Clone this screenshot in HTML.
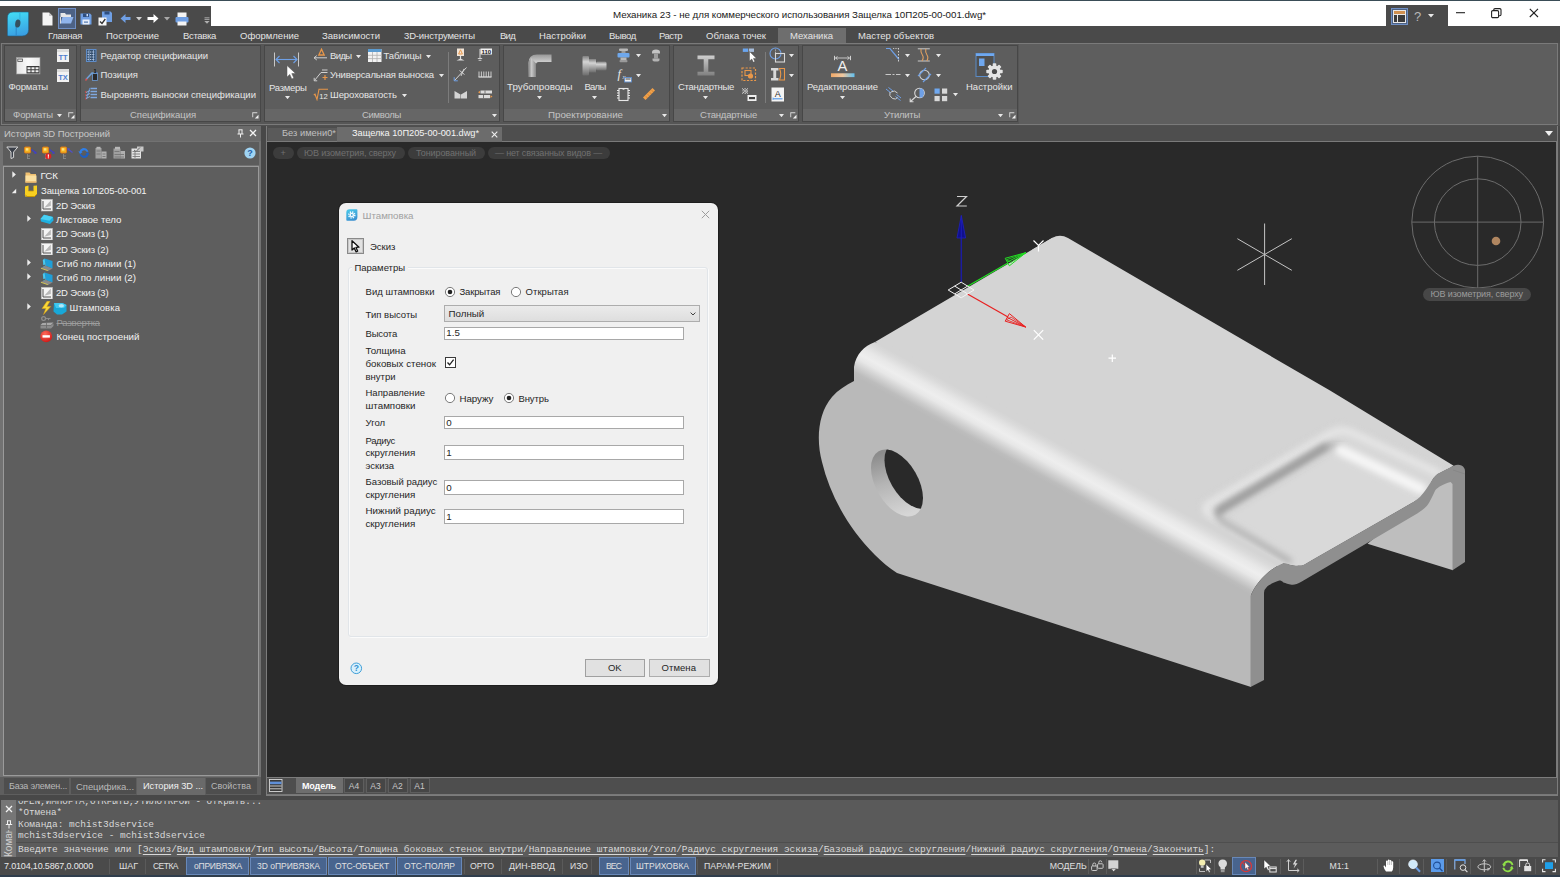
<!DOCTYPE html><html><head><meta charset="utf-8"><title>nanoCAD Mechanica</title><style>

html,body{margin:0;padding:0;}
body{width:1560px;height:877px;overflow:hidden;background:#484848;position:relative;font-family:"Liberation Sans",sans-serif;font-size:11px;}
body div,body span,body svg{position:absolute;}
span{white-space:pre;}

</style></head><body>
<div style="left:0px;top:0px;width:1560px;height:27px;background:#ffffff;"></div>
<div style="left:0px;top:0px;width:1560px;height:1px;background:#3a4d57;"></div>
<div style="left:0px;top:6px;width:211px;height:21px;background:#4a4a4a;"></div>
<div style="left:1386px;top:5px;width:62px;height:22px;background:#4a4a4a;"></div>
<div style="left:0px;top:26px;width:1560px;height:18px;background:#4a4a4a;"></div>
<div style="left:778px;top:28px;width:68px;height:16px;background:#6e6e6e;"></div>
<div style="left:0px;top:43px;width:1560px;height:83px;background:#505050;"></div>
<div style="left:1px;top:43px;width:1557px;height:82px;background:#565656;border:1px solid #7a7a7a;box-sizing:border-box;"></div>
<span style="left:613px;top:8.4px;font-size:9.75px;line-height:13.75px;color:#1a1a1a;letter-spacing:-0.031px;">Механика 23 - не для коммерческого использования Защелка 10П205-00-001.dwg*</span>
<span style="left:48px;top:29.2px;font-size:9.5px;line-height:13.5px;color:#e4e4e4;letter-spacing:-0.309px;">Главная</span>
<span style="left:106px;top:29.2px;font-size:9.5px;line-height:13.5px;color:#e4e4e4;letter-spacing:0.009px;">Построение</span>
<span style="left:183px;top:29.2px;font-size:9.5px;line-height:13.5px;color:#e4e4e4;letter-spacing:-0.331px;">Вставка</span>
<span style="left:240px;top:29.2px;font-size:9.5px;line-height:13.5px;color:#e4e4e4;letter-spacing:0.003px;">Оформление</span>
<span style="left:322px;top:29.2px;font-size:9.5px;line-height:13.5px;color:#e4e4e4;letter-spacing:0.031px;">Зависимости</span>
<span style="left:404px;top:29.2px;font-size:9.5px;line-height:13.5px;color:#e4e4e4;letter-spacing:-0.145px;">3D-инструменты</span>
<span style="left:500px;top:29.2px;font-size:9.5px;line-height:13.5px;color:#e4e4e4;letter-spacing:-0.731px;">Вид</span>
<span style="left:539px;top:29.2px;font-size:9.5px;line-height:13.5px;color:#e4e4e4;letter-spacing:0.046px;">Настройки</span>
<span style="left:609px;top:29.2px;font-size:9.5px;line-height:13.5px;color:#e4e4e4;letter-spacing:-0.346px;">Вывод</span>
<span style="left:659px;top:29.2px;font-size:9.5px;line-height:13.5px;color:#e4e4e4;letter-spacing:-0.539px;">Растр</span>
<span style="left:706px;top:29.2px;font-size:9.5px;line-height:13.5px;color:#e4e4e4;letter-spacing:0.064px;">Облака точек</span>
<span style="left:790px;top:29.2px;font-size:9.5px;line-height:13.5px;color:#e4e4e4;letter-spacing:-0.029px;">Механика</span>
<span style="left:858px;top:29.2px;font-size:9.5px;line-height:13.5px;color:#e4e4e4;letter-spacing:0.002px;">Мастер объектов</span>
<div style="left:4px;top:45px;width:73px;height:77px;background:#5d5d5d;border:1px solid #474747;box-sizing:border-box;"></div>
<div style="left:5px;top:109px;width:71px;height:12px;background:#666666;"></div>
<span style="left:13px;top:108.2px;font-size:9.5px;line-height:13.5px;color:#c4c4c4;letter-spacing:-0.082px;">Форматы</span>
<svg style="left:68px;top:112px;" width="7" height="7" viewBox="0 0 7 7"><path d="M0.3 0.3H5.3V1.2H1.2V5.3H0.3Z" fill="#dcdcdc"/><path d="M6.5 2.8V6.5H2.8Z" fill="#f0f0f0"/></svg>
<svg style="left:56.5px;top:113.5px;" width="5" height="3.5" viewBox="0 0 5 3.5"><path d="M0 0H5L2.5 3.2Z" fill="#e8e8e8"/></svg>
<div style="left:80px;top:45px;width:181px;height:77px;background:#5d5d5d;border:1px solid #474747;box-sizing:border-box;"></div>
<div style="left:81px;top:109px;width:179px;height:12px;background:#666666;"></div>
<span style="left:130px;top:108.2px;font-size:9.5px;line-height:13.5px;color:#c4c4c4;letter-spacing:-0.059px;">Спецификация</span>
<svg style="left:252px;top:112px;" width="7" height="7" viewBox="0 0 7 7"><path d="M0.3 0.3H5.3V1.2H1.2V5.3H0.3Z" fill="#dcdcdc"/><path d="M6.5 2.8V6.5H2.8Z" fill="#f0f0f0"/></svg>
<div style="left:264px;top:45px;width:236px;height:77px;background:#5d5d5d;border:1px solid #474747;box-sizing:border-box;"></div>
<div style="left:265px;top:109px;width:234px;height:12px;background:#666666;"></div>
<span style="left:362px;top:108.2px;font-size:9.5px;line-height:13.5px;color:#c4c4c4;letter-spacing:-0.299px;">Символы</span>
<svg style="left:491.5px;top:113.5px;" width="5" height="3.5" viewBox="0 0 5 3.5"><path d="M0 0H5L2.5 3.2Z" fill="#e8e8e8"/></svg>
<div style="left:503px;top:45px;width:167px;height:77px;background:#5d5d5d;border:1px solid #474747;box-sizing:border-box;"></div>
<div style="left:504px;top:109px;width:165px;height:12px;background:#666666;"></div>
<span style="left:548px;top:108.1px;font-size:9.75px;line-height:13.75px;color:#c4c4c4;letter-spacing:-0.011px;">Проектирование</span>
<svg style="left:661.5px;top:113.5px;" width="5" height="3.5" viewBox="0 0 5 3.5"><path d="M0 0H5L2.5 3.2Z" fill="#e8e8e8"/></svg>
<div style="left:673px;top:45px;width:126px;height:77px;background:#5d5d5d;border:1px solid #474747;box-sizing:border-box;"></div>
<div style="left:674px;top:109px;width:124px;height:12px;background:#666666;"></div>
<span style="left:700px;top:108.2px;font-size:9.5px;line-height:13.5px;color:#c4c4c4;letter-spacing:-0.205px;">Стандартные</span>
<svg style="left:790px;top:112px;" width="7" height="7" viewBox="0 0 7 7"><path d="M0.3 0.3H5.3V1.2H1.2V5.3H0.3Z" fill="#dcdcdc"/><path d="M6.5 2.8V6.5H2.8Z" fill="#f0f0f0"/></svg>
<svg style="left:778.5px;top:113.5px;" width="5" height="3.5" viewBox="0 0 5 3.5"><path d="M0 0H5L2.5 3.2Z" fill="#e8e8e8"/></svg>
<div style="left:802px;top:45px;width:216px;height:77px;background:#5d5d5d;border:1px solid #474747;box-sizing:border-box;"></div>
<div style="left:803px;top:109px;width:214px;height:12px;background:#666666;"></div>
<span style="left:884px;top:108.2px;font-size:9.5px;line-height:13.5px;color:#c4c4c4;letter-spacing:-0.247px;">Утилиты</span>
<svg style="left:1009px;top:112px;" width="7" height="7" viewBox="0 0 7 7"><path d="M0.3 0.3H5.3V1.2H1.2V5.3H0.3Z" fill="#dcdcdc"/><path d="M6.5 2.8V6.5H2.8Z" fill="#f0f0f0"/></svg>
<svg style="left:997.5px;top:113.5px;" width="5" height="3.5" viewBox="0 0 5 3.5"><path d="M0 0H5L2.5 3.2Z" fill="#e8e8e8"/></svg>
<div style="left:1019px;top:44px;width:538px;height:80px;background:#5e5e5e;"></div>
<div style="left:0px;top:126px;width:261px;height:15px;background:#6a6a6a;"></div>
<span style="left:4px;top:126.8px;font-size:9.5px;line-height:13.5px;color:#c8c8c8;letter-spacing:-0.057px;">История 3D Построений</span>
<div style="left:0px;top:141px;width:261px;height:637px;background:#727272;"></div>
<div style="left:3px;top:142px;width:256px;height:23px;background:#5c5c5c;"></div>
<div style="left:3px;top:165.5px;width:256px;height:610.5px;background:#5e5e5e;border:1px solid #9a9a9a;box-sizing:border-box;"></div>
<div style="left:0px;top:777px;width:261px;height:18px;background:#5e5e5e;"></div>
<div style="left:4px;top:778px;width:65px;height:16px;background:#4e4e4e;"></div>
<div style="left:71px;top:778px;width:65px;height:16px;background:#4e4e4e;"></div>
<div style="left:206px;top:778px;width:51px;height:16px;background:#4e4e4e;"></div>
<div style="left:137px;top:778px;width:68px;height:17px;background:#6a6a6a;"></div>
<span style="left:9px;top:780.0px;font-size:9.0px;line-height:13.0px;color:#b8b8b8;letter-spacing:-0.197px;">База элемен...</span>
<span style="left:76px;top:779.8px;font-size:9.5px;line-height:13.5px;color:#b8b8b8;letter-spacing:-0.062px;">Специфика...</span>
<span style="left:143px;top:779.9px;font-size:9.25px;line-height:13.25px;color:#f0f0f0;letter-spacing:-0.039px;">История 3D ...</span>
<span style="left:211px;top:780.0px;font-size:9.0px;line-height:13.0px;color:#b8b8b8;letter-spacing:0.060px;">Свойства</span>
<div style="left:265.5px;top:126px;width:1292.5px;height:670px;background:#7c7c7c;"></div>
<div style="left:267px;top:126px;width:1290px;height:15px;background:#4e4e4e;"></div>
<div style="left:267px;top:141px;width:1290px;height:1px;background:#7a7a7a;"></div>
<div style="left:268px;top:128px;width:69px;height:13px;background:#5a5a5a;"></div>
<div style="left:337px;top:127px;width:165px;height:15px;background:#6c6c6c;"></div>
<span style="left:282px;top:127.4px;font-size:9.25px;line-height:13.25px;color:#c0c0c0;letter-spacing:0.044px;">Без имени0*</span>
<span style="left:352px;top:127.4px;font-size:9.25px;line-height:13.25px;color:#f4f4f4;letter-spacing:-0.032px;">Защелка 10П205-00-001.dwg*</span>
<svg style="left:491px;top:130.5px;" width="7" height="7" viewBox="0 0 7 7"><path d="M0.7 0.7L6.3 6.3M6.3 0.7L0.7 6.3" stroke="#f0f0f0" stroke-width="1.1"/></svg>
<svg style="left:1545px;top:131px;" width="8" height="5" viewBox="0 0 8 5"><path d="M0 0H8L4 5Z" fill="#f0f0f0"/></svg>
<div style="left:267px;top:142px;width:1289px;height:634.7px;background:#292929;"></div>
<div style="left:1556px;top:142px;width:1px;height:634px;background:#7a7a7a;"></div>
<div style="left:267px;top:777.5px;width:1290px;height:17px;background:#4e4e4e;"></div>
<div style="left:267px;top:794px;width:1290px;height:1px;background:#787878;"></div>
<div style="left:296px;top:778px;width:47px;height:15px;background:#6e6e6e;"></div>
<span style="left:302px;top:779.5px;font-size:9.0px;line-height:13.0px;color:#ffffff;font-weight:bold;letter-spacing:-0.141px;">Модель</span>
<div style="left:344px;top:778px;width:20px;height:15px;background:#464646;border:1px solid #5e5e5e;box-sizing:border-box;"></div>
<span style="left:348.7px;top:779.8px;font-size:8.5px;line-height:12.5px;color:#c8c8c8;letter-spacing:0.050px;">А4</span>
<div style="left:365.5px;top:778px;width:20px;height:15px;background:#464646;border:1px solid #5e5e5e;box-sizing:border-box;"></div>
<span style="left:370.2px;top:779.8px;font-size:8.5px;line-height:12.5px;color:#c8c8c8;letter-spacing:0.050px;">А3</span>
<div style="left:387.5px;top:778px;width:20px;height:15px;background:#464646;border:1px solid #5e5e5e;box-sizing:border-box;"></div>
<span style="left:392.2px;top:779.8px;font-size:8.5px;line-height:12.5px;color:#c8c8c8;letter-spacing:0.050px;">А2</span>
<div style="left:409.5px;top:778px;width:20px;height:15px;background:#464646;border:1px solid #5e5e5e;box-sizing:border-box;"></div>
<span style="left:414.2px;top:779.8px;font-size:8.5px;line-height:12.5px;color:#c8c8c8;letter-spacing:0.050px;">А1</span>
<svg style="left:269px;top:779px;" width="14" height="13" viewBox="0 0 14 13"><rect x="0.5" y="0.5" width="12.5" height="12" fill="#3a3a3a" stroke="#d8d8d8" stroke-width="0.9"/><rect x="1" y="2.6" width="11.5" height="2.6" fill="#5f8fd8"/><path d="M1 7H12.5M1 9.8H12.5" stroke="#d8d8d8" stroke-width="0.9"/></svg>
<div style="left:1px;top:800px;width:1557px;height:57px;background:#5a5a5a;"></div>
<div style="left:1px;top:800px;width:15px;height:57px;background:#767676;"></div>
<div style="left:16px;top:842px;width:1542px;height:1px;background:#4e4e4e;"></div>
<div style="left:16px;top:843px;width:1542px;height:14px;background:#5c5c5c;"></div>
<span style="left:18px;top:795.4px;font-size:9.25px;line-height:13.25px;color:#d8d8d8;font-family:'Liberation Mono',monospace;letter-spacing:-0.006px;clip-path:inset(5.5px 0 0 0);">OPEN,ИМПОРТА,ОТКРЫТЬ,УТИЛОТКРОЙ - Открыть...</span>
<span style="left:18px;top:806.1px;font-size:9.25px;line-height:13.25px;color:#d8d8d8;font-family:'Liberation Mono',monospace;letter-spacing:-0.052px;">*Отмена*</span>
<span style="left:18px;top:817.9px;font-size:9.5px;line-height:13.5px;color:#d8d8d8;font-family:'Liberation Mono',monospace;letter-spacing:-0.035px;">Команда: mchist3dservice</span>
<span style="left:18px;top:829.1px;font-size:9.5px;line-height:13.5px;color:#d8d8d8;font-family:'Liberation Mono',monospace;letter-spacing:-0.034px;">mchist3dservice - mchist3dservice</span>
<div style="left:0px;top:857px;width:1560px;height:18px;background:#4a4a4a;"></div>
<div style="left:0px;top:875px;width:1560px;height:2px;background:#2f3d4c;"></div>
<span style="left:4px;top:859.5px;font-size:9.0px;line-height:13.0px;color:#e8e8e8;letter-spacing:-0.171px;">7.0104,10.5867,0.0000</span>
<div style="left:186px;top:857px;width:63px;height:17.5px;background:#48648e;border:1px solid #6888b8;box-sizing:border-box;"></div>
<div style="left:250px;top:857px;width:77px;height:17.5px;background:#48648e;border:1px solid #6888b8;box-sizing:border-box;"></div>
<div style="left:328px;top:857px;width:68px;height:17.5px;background:#48648e;border:1px solid #6888b8;box-sizing:border-box;"></div>
<div style="left:397px;top:857px;width:65px;height:17.5px;background:#48648e;border:1px solid #6888b8;box-sizing:border-box;"></div>
<div style="left:599px;top:857px;width:30px;height:17.5px;background:#48648e;border:1px solid #6888b8;box-sizing:border-box;"></div>
<div style="left:630px;top:857px;width:66px;height:17.5px;background:#48648e;border:1px solid #6888b8;box-sizing:border-box;"></div>
<span style="left:119px;top:859.5px;font-size:9.0px;line-height:13.0px;color:#e0e0e0;letter-spacing:-0.042px;">ШАГ</span>
<span style="left:153px;top:859.8px;font-size:8.5px;line-height:12.5px;color:#e0e0e0;letter-spacing:-0.525px;">СЕТКА</span>
<span style="left:194px;top:859.8px;font-size:8.5px;line-height:12.5px;color:#e0e0e0;letter-spacing:-0.211px;">оПРИВЯЗКА</span>
<span style="left:257px;top:859.8px;font-size:8.5px;line-height:12.5px;color:#e0e0e0;letter-spacing:-0.010px;">3D оПРИВЯЗКА</span>
<span style="left:335px;top:859.8px;font-size:8.5px;line-height:12.5px;color:#e0e0e0;letter-spacing:-0.122px;">ОТС-ОБЪЕКТ</span>
<span style="left:404px;top:859.8px;font-size:8.5px;line-height:12.5px;color:#e0e0e0;letter-spacing:0.024px;">ОТС-ПОЛЯР</span>
<span style="left:470px;top:859.6px;font-size:8.75px;line-height:12.75px;color:#e0e0e0;letter-spacing:-0.002px;">ОРТО</span>
<span style="left:509px;top:859.6px;font-size:8.75px;line-height:12.75px;color:#e0e0e0;letter-spacing:0.078px;">ДИН-ВВОД</span>
<span style="left:570px;top:859.8px;font-size:8.5px;line-height:12.5px;color:#e0e0e0;letter-spacing:0.077px;">ИЗО</span>
<span style="left:606px;top:859.8px;font-size:8.5px;line-height:12.5px;color:#e0e0e0;letter-spacing:-0.826px;">ВЕС</span>
<span style="left:636px;top:859.8px;font-size:8.5px;line-height:12.5px;color:#e0e0e0;letter-spacing:-0.007px;">ШТРИХОВКА</span>
<span style="left:704px;top:859.6px;font-size:8.75px;line-height:12.75px;color:#e0e0e0;letter-spacing:0.023px;">ПАРАМ-РЕЖИМ</span>
<div style="left:109px;top:859px;width:1px;height:15px;background:#5a5a5a;"></div>
<div style="left:145px;top:859px;width:1px;height:15px;background:#5a5a5a;"></div>
<div style="left:464px;top:859px;width:1px;height:15px;background:#5a5a5a;"></div>
<div style="left:501px;top:859px;width:1px;height:15px;background:#5a5a5a;"></div>
<div style="left:562px;top:859px;width:1px;height:15px;background:#5a5a5a;"></div>
<div style="left:591px;top:859px;width:1px;height:15px;background:#5a5a5a;"></div>
<div style="left:697px;top:859px;width:1px;height:15px;background:#5a5a5a;"></div>
<div style="left:777px;top:859px;width:1px;height:15px;background:#5a5a5a;"></div>
<span style="left:1049.7px;top:859.6px;font-size:8.75px;line-height:12.75px;color:#e0e0e0;letter-spacing:-0.027px;">МОДЕЛЬ</span>
<span style="left:1329.4px;top:859.6px;font-size:8.75px;line-height:12.75px;color:#e0e0e0;letter-spacing:0.036px;">М1:1</span>
<div style="left:339px;top:203px;width:378.6px;height:482.4px;background:#f0f0f0;border-radius:7px;box-shadow:0 0 0 1px #1e1e1e;"></div>
<svg style="left:7px;top:11px;" width="23" height="26" viewBox="0 0 23 26"><defs><linearGradient id="lg1" x1="0.3" y1="0" x2="0.5" y2="1"><stop offset="0" stop-color="#42dcf6"/><stop offset="1" stop-color="#3a9ee2"/></linearGradient></defs>
<path d="M6 1H20.6Q21.6 1 21.6 2V18.5Q21.6 25 15 25H1.4Q0.4 25 0.4 24V7Q0.4 1 6 1Z" fill="url(#lg1)" stroke="#1d5f88" stroke-width="0.6"/>
<path d="M12.9 1.3V9.5" stroke="#2fb4e0" stroke-width="1"/>
<path d="M9.2 15.5V24.8" stroke="#2c86c8" stroke-width="1"/>
<ellipse cx="10.8" cy="12.5" rx="2.6" ry="4.1" fill="#35505f" transform="rotate(8 10.8 12.5)"/></svg>
<svg style="left:42px;top:12px;" width="11" height="14" viewBox="0 0 11 14"><path d="M0.5 0.5H7L10.5 4V13.5H0.5Z" fill="#f4f4f4"/><path d="M7 0.5V4H10.5Z" fill="#c8c8c8"/></svg>
<div style="left:58px;top:8px;width:18px;height:21px;background:#4d6285;border:1px solid #6f8fc4;box-sizing:border-box;"></div>
<svg style="left:60px;top:12px;" width="14" height="12" viewBox="0 0 14 12"><path d="M0.5 1H5L6 2.5H11V5H0.5Z" fill="#e8e8e8"/><path d="M2.5 5H13.5L11 11.5H0.5Z" fill="#8fb4ec"/><path d="M0.5 5V11.5" stroke="#dcdcdc"/></svg>
<svg style="left:80px;top:13px;" width="12" height="12" viewBox="0 0 12 12"><path d="M0.5 0.5H10L11.5 2V11.5H0.5Z" fill="#6f9fe4"/><rect x="3" y="0.5" width="6" height="3.5" fill="#2f4f80"/><rect x="6.5" y="1" width="1.5" height="2.3" fill="#cfe0f8"/><rect x="2.5" y="6.5" width="7" height="5" fill="#e8eef8"/><rect x="4" y="8.5" width="4" height="1.2" fill="#5078b0"/></svg>
<svg style="left:98px;top:11px;" width="15" height="15" viewBox="0 0 15 15"><path d="M4 0.5H12.5L14 2V11H4Z" fill="#6f9fe4"/><rect x="6.5" y="0.5" width="5" height="3" fill="#2f4f80"/><rect x="0.5" y="6.5" width="8" height="8" fill="#f8f8f8"/><path d="M2 10.5L4 12.5L7.3 8" stroke="#303030" stroke-width="1.3" fill="none"/></svg>
<svg style="left:120px;top:13px;" width="11" height="11" viewBox="0 0 11 11"><path d="M0.5 5.5L5.5 1V4H10.5V7H5.5V10Z" fill="#6f9fe4"/></svg>
<svg style="left:136px;top:17px;" width="6" height="4" viewBox="0 0 6 4"><path d="M0 0H6L3 3.5Z" fill="#d0d0d0"/></svg>
<svg style="left:147px;top:13px;" width="12" height="11" viewBox="0 0 12 11"><path d="M11.5 5.5L6.5 1V4H0.5V7H6.5V10Z" fill="#ffffff"/></svg>
<svg style="left:164px;top:17px;" width="6" height="4" viewBox="0 0 6 4"><path d="M0 0H6L3 3.5Z" fill="#a8a8a8"/></svg>
<svg style="left:175px;top:12px;" width="14" height="14" viewBox="0 0 14 14"><rect x="2.5" y="0.5" width="9" height="5" fill="#f4f4f4"/><rect x="0.5" y="5" width="13" height="5.5" rx="1" fill="#6f9fe4"/><rect x="2.5" y="9.5" width="9" height="4" fill="#f4f4f4"/></svg>
<svg style="left:204px;top:17px;" width="6" height="7" viewBox="0 0 6 7"><path d="M0.5 0.8H5.5M0.5 2.4H5.5" stroke="#b0b0b0" stroke-width="0.9"/><path d="M0.3 4H5.7L3 6.8Z" fill="#b0b0b0"/></svg>
<div style="left:1391px;top:8px;width:17px;height:17px;background:#4d6285;border:1px solid #6f8fc4;box-sizing:border-box;"></div>
<svg style="left:1393px;top:10px;" width="13" height="13" viewBox="0 0 13 13"><rect x="0.5" y="0.5" width="12" height="12" fill="#3b3b3b" stroke="#e8e8e8"/><rect x="1" y="1" width="11" height="3" fill="#d09050"/><path d="M4.5 4V12.5M0.5 4.5H12.5" stroke="#e8e8e8"/></svg>
<span style="left:1414px;top:7.5px;font-size:13px;line-height:17px;color:#b8b8b8;">?</span>
<svg style="left:1428px;top:14px;" width="6" height="4" viewBox="0 0 6 4"><path d="M0 0H6L3 3.5Z" fill="#e8e8e8"/></svg>
<svg style="left:1456px;top:12px;" width="10" height="2" viewBox="0 0 10 2"><path d="M0 0.7H9" stroke="#222" stroke-width="1.1"/></svg>
<svg style="left:1491px;top:8px;" width="11" height="11" viewBox="0 0 11 11"><rect x="0.6" y="2.6" width="7" height="7" rx="1.2" fill="none" stroke="#222" stroke-width="1.1"/><path d="M2.8 2.4V1.8Q2.8 0.6 4 0.6H8.8Q10 0.6 10 1.8V6.6Q10 7.8 8.8 7.8H8" fill="none" stroke="#222" stroke-width="1.1"/></svg>
<svg style="left:1529px;top:8px;" width="10" height="10" viewBox="0 0 10 10"><path d="M0.8 0.8L9 9M9 0.8L0.8 9" stroke="#222" stroke-width="1.1"/></svg>
<svg style="left:16px;top:57px;" width="25" height="18" viewBox="0 0 25 18"><defs><linearGradient id="fg1" x1="0" y1="0" x2="1" y2="0"><stop offset="0" stop-color="#e4e4e4"/><stop offset="0.5" stop-color="#fbfbfb"/><stop offset="1" stop-color="#e8e8e8"/></linearGradient></defs>
<rect x="0.5" y="0.5" width="23.5" height="16.5" fill="url(#fg1)" stroke="#9a9a9a" stroke-width="0.6"/>
<rect x="1.8" y="2" width="4.6" height="2.4" fill="#e0e0e0" stroke="#505050" stroke-width="0.8"/>
<rect x="10.5" y="9" width="13" height="7.5" fill="#3a3a3a"/>
<path d="M11.5 10.3h3v2h-3zM15.5 10.3h3v2h-3zM19.5 10.3h3v2h-3zM11.5 13.3h3v2h-3zM15.5 13.3h3v2h-3zM19.5 13.3h3v2h-3z" fill="#f0f0f0"/></svg>
<span style="left:8.5px;top:80.2px;font-size:9.5px;line-height:13.5px;color:#e6e6e6;letter-spacing:-0.154px;">Форматы</span>
<svg style="left:57px;top:49px;" width="12" height="13" viewBox="0 0 12 13"><rect x="0" y="0" width="12" height="13" fill="#f2f2f2"/><rect x="0" y="0" width="12" height="3" fill="#dcdcdc"/><text x="6" y="10.6" font-family="Liberation Sans" font-weight="bold" font-size="7.5" fill="#4f7fd0" text-anchor="middle">TT</text></svg>
<svg style="left:57px;top:68.5px;" width="12" height="13" viewBox="0 0 12 13"><rect x="0" y="0" width="12" height="13" fill="#f2f2f2"/><rect x="0" y="0" width="12" height="3" fill="#dcdcdc"/><text x="6" y="10.6" font-family="Liberation Sans" font-weight="bold" font-size="7.5" fill="#4f7fd0" text-anchor="middle">TX</text></svg>
<svg style="left:86px;top:49px;" width="11" height="13" viewBox="0 0 11 13"><rect x="0.5" y="0.5" width="9.5" height="12" fill="#35506f" stroke="#5f8cc8"/><path d="M3 1V12M7.5 1V12" stroke="#9bbbe8" stroke-width="0.7"/><path d="M1.5 3H9M1.5 5.5H9M1.5 8H9M1.5 10.5H9" stroke="#c8d8f0" stroke-width="0.9" stroke-dasharray="1.4 1"/></svg>
<span style="left:100.5px;top:48.8px;font-size:9.5px;line-height:13.5px;color:#e6e6e6;letter-spacing:-0.038px;">Редактор спецификации</span>
<svg style="left:85px;top:68px;" width="14" height="14" viewBox="0 0 14 14"><path d="M1 11.5L7 5H12.5" stroke="#6f9fd8" stroke-width="1.6" fill="none"/><path d="M0.5 12.5L2 10.8" stroke="#e05050" stroke-width="1.4"/><rect x="7.5" y="5.5" width="5" height="7" fill="#2a2a2a" stroke="#6f9fd8" stroke-width="0.8"/><text x="10" y="4.6" font-size="5.5" font-weight="bold" font-family="Liberation Sans" fill="#101010" text-anchor="middle">1</text></svg>
<span style="left:100.5px;top:68.2px;font-size:9.5px;line-height:13.5px;color:#e6e6e6;letter-spacing:-0.010px;">Позиция</span>
<svg style="left:85px;top:87px;" width="13" height="14" viewBox="0 0 13 14"><path d="M5.5 1.5H12M5.5 4.5H12M5.5 7.5H12M5.5 10.5H12" stroke="#7fa8e0" stroke-width="1.7"/><path d="M1.5 12L5 1" stroke="#5f8cc8" stroke-width="1.2"/><path d="M0.8 4V13" stroke="#d04848" stroke-width="1.1" stroke-dasharray="2 1.2"/><path d="M1 5.5L5 3.5M1 8.5L5 6.5M1 11.5L5 9.5" stroke="#9bbbe8" stroke-width="0.8"/></svg>
<span style="left:100.5px;top:88.2px;font-size:9.5px;line-height:13.5px;color:#e6e6e6;letter-spacing:0.013px;">Выровнять выноски спецификации</span>
<svg style="left:272px;top:51px;" width="30" height="30" viewBox="0 0 30 30"><path d="M2.5 1.5V15.5M26.5 1.5V15.5" stroke="#c8c8c8" stroke-width="1"/>
<path d="M4 8.5H25" stroke="#6fa0e6" stroke-width="1.1"/><path d="M7.5 5L4 8.5L7.5 12M21.5 5L25 8.5L21.5 12" stroke="#6fa0e6" stroke-width="1.1" fill="none"/>
<path d="M15 14.5V26L17.8 23.4L19.8 28L21.8 27L19.8 22.6L23.5 22.4Z" fill="#ffffff" stroke="#555" stroke-width="0.5"/></svg>
<span style="left:269px;top:80.8px;font-size:9.5px;line-height:13.5px;color:#e6e6e6;letter-spacing:-0.283px;">Размеры</span>
<svg style="left:285px;top:95.5px;" width="5" height="3.5" viewBox="0 0 5 3.5"><path d="M0 0H5L2.5 3.2Z" fill="#e8e8e8"/></svg>
<svg style="left:313px;top:48px;" width="15" height="13" viewBox="0 0 15 13"><path d="M8.5 1.2L5.8 7H11.2Z" fill="none" stroke="#e8974a" stroke-width="1.3"/><path d="M1 9.8H14" stroke="#d0d0d0" stroke-width="1"/><path d="M3.8 7.6L1 9.8L3.8 12" stroke="#d0d0d0" stroke-width="1" fill="none"/></svg>
<span style="left:330px;top:48.8px;font-size:9.5px;line-height:13.5px;color:#e6e6e6;letter-spacing:-0.630px;">Виды</span>
<svg style="left:356px;top:54.5px;" width="5" height="3.5" viewBox="0 0 5 3.5"><path d="M0 0H5L2.5 3.2Z" fill="#e8e8e8"/></svg>
<svg style="left:368px;top:49px;" width="14" height="13" viewBox="0 0 14 13"><rect x="0" y="0" width="13.5" height="13" fill="#f2f2f2"/><rect x="0" y="0" width="13.5" height="3" fill="#5b9bd0"/><path d="M4.5 3V13M9 3V13M0 6.3H13.5M0 9.6H13.5" stroke="#b0b0b0" stroke-width="0.8"/></svg>
<span style="left:383.5px;top:48.8px;font-size:9.5px;line-height:13.5px;color:#e6e6e6;letter-spacing:-0.114px;">Таблицы</span>
<svg style="left:426px;top:54.5px;" width="5" height="3.5" viewBox="0 0 5 3.5"><path d="M0 0H5L2.5 3.2Z" fill="#e8e8e8"/></svg>
<svg style="left:313px;top:69px;" width="16" height="13" viewBox="0 0 16 13"><path d="M1.5 11.5L8 3.5H14.5" stroke="#d0d0d0" stroke-width="1" fill="none"/><path d="M1.2 8.8L1.2 11.8L4.2 11.8" stroke="#d0d0d0" stroke-width="1" fill="none"/><path d="M9 1H14.5" stroke="#d0d0d0" stroke-width="1"/><path d="M9.5 8.5H14.5M12 6V11" stroke="#e8974a" stroke-width="1.2"/></svg>
<span style="left:330px;top:68.2px;font-size:9.5px;line-height:13.5px;color:#e6e6e6;letter-spacing:-0.158px;">Универсальная выноска</span>
<svg style="left:439px;top:74.0px;" width="5" height="3.5" viewBox="0 0 5 3.5"><path d="M0 0H5L2.5 3.2Z" fill="#e8e8e8"/></svg>
<svg style="left:313px;top:88px;" width="16" height="13" viewBox="0 0 16 13"><path d="M0.8 7L2 6.2L4 11.5L6 1.2H15" stroke="#e8974a" stroke-width="1.1" fill="none"/><text x="10.6" y="11.3" font-size="8" font-family="Liberation Sans" fill="#e8e8e8" text-anchor="middle" textLength="8.5" lengthAdjust="spacingAndGlyphs">12</text></svg>
<span style="left:330px;top:87.8px;font-size:9.5px;line-height:13.5px;color:#e6e6e6;letter-spacing:-0.075px;">Шероховатость</span>
<svg style="left:402px;top:93.5px;" width="5" height="3.5" viewBox="0 0 5 3.5"><path d="M0 0H5L2.5 3.2Z" fill="#e8e8e8"/></svg>
<div style="left:448px;top:52px;width:1px;height:51px;background:#7c7c7c;"></div>
<svg style="left:454px;top:48px;" width="13" height="14" viewBox="0 0 13 14"><rect x="3" y="0.5" width="7" height="7.5" fill="#f2e6da"/><path d="M6.5 1.8L4.6 6H8.4Z" fill="none" stroke="#e8974a" stroke-width="1"/><path d="M6.5 8V11" stroke="#e0e0e0" stroke-width="1.2"/><path d="M2.5 12.5L6.5 10.5L10.5 12.5Z" fill="#e0e0e0"/></svg>
<svg style="left:477px;top:48px;" width="16" height="14" viewBox="0 0 16 14"><rect x="3.5" y="0.5" width="11.5" height="6" fill="#f0f0f0"/><text x="9.3" y="5.6" font-size="6" font-weight="bold" font-family="Liberation Sans" fill="#202020" text-anchor="middle">110</text><path d="M3 1V10.5" stroke="#d8d8d8" stroke-width="1"/><path d="M0.8 10.5H5.2M1.6 12.3H4.4" stroke="#d8d8d8" stroke-width="0.9"/></svg>
<svg style="left:453px;top:66px;" width="15" height="16" viewBox="0 0 15 16"><path d="M1.5 14.5L13.5 1.5" stroke="#d8d8d8" stroke-width="1"/><path d="M1.2 11.2V14.8H4.8" stroke="#6fa0e6" stroke-width="1" fill="none"/><path d="M6.5 4.5L11.5 8.5M11 2.8L8 10" stroke="#d8d8d8" stroke-width="0.9"/></svg>
<svg style="left:478px;top:70px;" width="14" height="8" viewBox="0 0 14 8"><path d="M0.5 7H13.5" stroke="#d8d8d8" stroke-width="1.3"/><path d="M1 1.5V7M3.4 1.5V7M5.8 1.5V7M8.2 1.5V7M10.6 1.5V7M13 1.5V7" stroke="#d8d8d8" stroke-width="0.9"/></svg>
<svg style="left:454px;top:90px;" width="14" height="9" viewBox="0 0 14 9"><path d="M0.5 1L6.5 4.5V8.5H0.5ZM13 1L7 4.5V8.5H13Z" fill="#d4d4d4"/></svg>
<svg style="left:478px;top:90px;" width="15" height="9" viewBox="0 0 15 9"><rect x="2.5" y="0.5" width="11.5" height="3" fill="#dcdcdc"/><rect x="0.5" y="5" width="11.5" height="3.2" fill="#dcdcdc"/><path d="M0 2.2L2 0.8V3.6Z M14.5 6.6L12.5 5.2V8Z" fill="#e8974a"/><path d="M7 0.5V3.5M5.5 5V8.2" stroke="#5c5c5c" stroke-width="0.8"/></svg>
<svg style="left:528px;top:54px;" width="24" height="23" viewBox="0 0 24 23"><defs><linearGradient id="pg1" x1="0" y1="0" x2="1" y2="0"><stop offset="0" stop-color="#828282"/><stop offset="0.4" stop-color="#c8c8c8"/><stop offset="1" stop-color="#848484"/></linearGradient>
<linearGradient id="pg2" x1="0" y1="0" x2="0" y2="1"><stop offset="0" stop-color="#989898"/><stop offset="0.35" stop-color="#d0d0d0"/><stop offset="1" stop-color="#808080"/></linearGradient></defs>
<path d="M0.5 23V9Q0.5 0.5 9 0.5H23.5V8H10.5Q8 8 8 10.5V23Z" fill="url(#pg2)"/>
<path d="M0.5 23V10Q0.5 6 3 4L8.2 9.5Q8 10 8 10.5V23Z" fill="url(#pg1)"/></svg>
<span style="left:507px;top:80.1px;font-size:9.75px;line-height:13.75px;color:#e6e6e6;letter-spacing:-0.026px;">Трубопроводы</span>
<svg style="left:536.5px;top:95.5px;" width="5" height="3.5" viewBox="0 0 5 3.5"><path d="M0 0H5L2.5 3.2Z" fill="#e8e8e8"/></svg>
<svg style="left:582px;top:55px;" width="25" height="21" viewBox="0 0 25 21"><defs><linearGradient id="sg1" x1="0" y1="0" x2="0" y2="1"><stop offset="0" stop-color="#808080"/><stop offset="0.3" stop-color="#d4d4d4"/><stop offset="1" stop-color="#6c6c6c"/></linearGradient></defs>
<rect x="0.5" y="1" width="6.5" height="19.5" rx="1" fill="url(#sg1)"/><rect x="7" y="4" width="7" height="13.5" fill="url(#sg1)"/><rect x="14" y="6.5" width="10.5" height="9" rx="1.5" fill="url(#sg1)"/></svg>
<span style="left:584.5px;top:80.2px;font-size:9.5px;line-height:13.5px;color:#e6e6e6;letter-spacing:-0.748px;">Валы</span>
<svg style="left:592px;top:95.5px;" width="5" height="3.5" viewBox="0 0 5 3.5"><path d="M0 0H5L2.5 3.2Z" fill="#e8e8e8"/></svg>
<svg style="left:617px;top:48px;" width="13" height="15" viewBox="0 0 13 15"><rect x="2" y="0.5" width="9" height="2.5" rx="1" fill="#b8b8b8"/><rect x="4.5" y="3" width="4" height="2" fill="#9a9a9a"/><rect x="0.5" y="5" width="12" height="4.5" rx="1" fill="#6fa8ec"/><rect x="3.5" y="9.5" width="6" height="2.5" fill="#b8b8b8"/><rect x="2.5" y="12" width="8" height="2.2" rx="1" fill="#9a9a9a"/></svg>
<svg style="left:636px;top:54.0px;" width="5" height="3.5" viewBox="0 0 5 3.5"><path d="M0 0H5L2.5 3.2Z" fill="#e8e8e8"/></svg>
<svg style="left:651px;top:49px;" width="10" height="13" viewBox="0 0 10 13"><path d="M1 3.2Q1 0.5 5 0.5Q9 0.5 9 3.2V4.5H1Z" fill="#c4c4c4"/><rect x="3" y="4.5" width="4" height="5" fill="#9c9c9c"/><path d="M1.5 9.5H8.5V11Q8.5 12.5 5 12.5Q1.5 12.5 1.5 11Z" fill="#b4b4b4"/></svg>
<svg style="left:617px;top:67px;" width="16" height="16" viewBox="0 0 16 16"><text x="0.5" y="10.5" font-family="Liberation Serif" font-style="italic" font-size="12.5" fill="#e8e8e8">f</text><text x="5.5" y="12" font-family="Liberation Serif" font-style="italic" font-size="7" fill="#e8e8e8">x</text><rect x="7.5" y="10.5" width="7" height="4.5" fill="#f0f0f0" stroke="#5f8cc8" stroke-width="0.9"/><path d="M8.5 12H13.5" stroke="#303030" stroke-width="0.9"/></svg>
<svg style="left:636px;top:73.5px;" width="5" height="3.5" viewBox="0 0 5 3.5"><path d="M0 0H5L2.5 3.2Z" fill="#e8e8e8"/></svg>
<svg style="left:616px;top:87px;" width="15" height="15" viewBox="0 0 15 15"><rect x="3" y="1.5" width="9" height="12" fill="none" stroke="#e8e8e8" stroke-width="1.1"/><path d="M1 3.5H3M1 6H3M1 8.5H3M1 11H3M12 3.5H14M12 6H14M12 8.5H14M12 11H14" stroke="#e8e8e8" stroke-width="1"/><path d="M6 1.5Q7.5 3.5 9 1.5" stroke="#e8e8e8" stroke-width="0.9" fill="none"/></svg>
<svg style="left:642px;top:87px;" width="14" height="14" viewBox="0 0 14 14"><path d="M1 10.5L10.5 1L13 3.5L3.5 13Z" fill="#f0a04a"/><path d="M4 9.5L5.2 10.7M6 7.5L7.2 8.7M8 5.5L9.2 6.7M10 3.5L11.2 4.7" stroke="#b06a20" stroke-width="0.8"/></svg>
<svg style="left:696px;top:54px;" width="20" height="23" viewBox="0 0 20 23"><defs><linearGradient id="ig1" x1="0" y1="0" x2="0" y2="1"><stop offset="0" stop-color="#cecece"/><stop offset="1" stop-color="#808080"/></linearGradient></defs>
<path d="M1.5 1.5H18.5V5.3H12.3V17.7H18.5V21.5H1.5V17.7H7.7V5.3H1.5Z" fill="url(#ig1)" stroke-linejoin="round"/></svg>
<span style="left:678px;top:80.2px;font-size:9.5px;line-height:13.5px;color:#e6e6e6;letter-spacing:-0.296px;">Стандартные</span>
<svg style="left:703px;top:95.5px;" width="5" height="3.5" viewBox="0 0 5 3.5"><path d="M0 0H5L2.5 3.2Z" fill="#e8e8e8"/></svg>
<svg style="left:742px;top:48px;" width="16" height="15" viewBox="0 0 16 15"><rect x="0.8" y="0.5" width="5.2" height="3.4" fill="#6aa6f0"/><rect x="6.8" y="0.5" width="5.2" height="3.4" fill="#a8bedc"/><path d="M7.5 3.5V13L9.8 11L11.3 14.3L12.8 13.6L11.4 10.4L14.3 10.2Z" fill="#ffffff" stroke="#444" stroke-width="0.4"/></svg>
<svg style="left:741px;top:67px;" width="16" height="15" viewBox="0 0 16 15"><rect x="1" y="1" width="13.5" height="12.5" fill="none" stroke="#e8974a" stroke-width="1.2" stroke-dasharray="2.2 1.4"/><rect x="4" y="3.5" width="6" height="5" fill="none" stroke="#e8974a" stroke-width="1.1"/><circle cx="9.5" cy="9" r="2.6" fill="#e8974a"/></svg>
<svg style="left:741px;top:87px;" width="16" height="15" viewBox="0 0 16 15"><circle cx="4" cy="4" r="2.2" fill="none" stroke="#d0d0d0" stroke-width="1.2" stroke-dasharray="1.3 0.9"/><path d="M1 1L7 7M7 1L1 7" stroke="#d0d0d0" stroke-width="0.7"/><rect x="6.5" y="8" width="9" height="6" fill="#f0f0f0"/><rect x="8" y="10" width="6" height="2.2" fill="#404040"/></svg>
<div style="left:765px;top:52px;width:1px;height:51px;background:#7c7c7c;"></div>
<svg style="left:769px;top:47px;" width="17" height="16" viewBox="0 0 17 16"><circle cx="6.5" cy="6.5" r="5.5" fill="none" stroke="#6fa0e6" stroke-width="1.1"/><rect x="6.5" y="6.5" width="9" height="8.5" fill="none" stroke="#d8d8d8" stroke-width="1.1"/><path d="M6.5 2.5V6.5H10.5" stroke="#d8d8d8" stroke-width="0.8" stroke-dasharray="1.2 1" fill="none"/></svg>
<svg style="left:789.2px;top:54.0px;" width="5" height="3.5" viewBox="0 0 5 3.5"><path d="M0 0H5L2.5 3.2Z" fill="#e8e8e8"/></svg>
<svg style="left:770px;top:67px;" width="16" height="15" viewBox="0 0 16 15"><path d="M1 1H8.5V3.5H6.2V11H8.5V13.5H1V11H3.3V3.5H1Z" fill="#d8d8d8"/><path d="M9.5 1.5H14.5V13H9.5Q12 7 9.5 1.5Z" fill="none" stroke="#e8974a" stroke-width="1.1"/></svg>
<svg style="left:789.2px;top:73.5px;" width="5" height="3.5" viewBox="0 0 5 3.5"><path d="M0 0H5L2.5 3.2Z" fill="#e8e8e8"/></svg>
<svg style="left:771px;top:87px;" width="14" height="15" viewBox="0 0 14 15"><rect x="0.5" y="0.5" width="12.5" height="14" fill="#f4f4f4"/><text x="6.7" y="9.5" font-size="9" font-family="Liberation Sans" fill="#303030" text-anchor="middle">A</text><path d="M2 11.8H11.5" stroke="#5b9be8" stroke-width="1.2"/><path d="M2 10.5V13" stroke="#5b9be8" stroke-width="0.8"/></svg>
<svg style="left:830px;top:55px;" width="26" height="23" viewBox="0 0 26 23"><defs><linearGradient id="eg1" x1="0" y1="0" x2="1" y2="0"><stop offset="0" stop-color="#f0a868"/><stop offset="0.5" stop-color="#f0c8a0"/><stop offset="1" stop-color="#60c0f0"/></linearGradient></defs>
<path d="M4.5 0.8V5.2M20.5 0.8V5.2" stroke="#e0e0e0" stroke-width="0.9"/><path d="M5.5 3H19.5" stroke="#e0e0e0" stroke-width="0.8"/><path d="M7.5 1.5L5.5 3L7.5 4.5M17.5 1.5L19.5 3L17.5 4.5" stroke="#e0e0e0" stroke-width="0.8" fill="none"/>
<text x="12.5" y="16.3" font-size="14.8" font-family="Liberation Sans" fill="#f0f0f0" text-anchor="middle">A</text>
<rect x="1" y="18.3" width="23.5" height="3.8" fill="url(#eg1)"/></svg>
<span style="left:807px;top:79.8px;font-size:9.5px;line-height:13.5px;color:#e6e6e6;letter-spacing:-0.098px;">Редактирование</span>
<svg style="left:839.5px;top:95.5px;" width="5" height="3.5" viewBox="0 0 5 3.5"><path d="M0 0H5L2.5 3.2Z" fill="#e8e8e8"/></svg>
<svg style="left:885px;top:47px;" width="16" height="16" viewBox="0 0 16 16"><path d="M1 1.5H5L14 12.5" stroke="#6fa0e6" stroke-width="1.2" fill="none"/><path d="M13.5 1V15" stroke="#d0d0d0" stroke-width="1" stroke-dasharray="1.5 1.5"/><path d="M8 1.5H13" stroke="#d0d0d0" stroke-width="0.9" stroke-dasharray="1.2 1.2"/></svg>
<svg style="left:905px;top:54.0px;" width="5" height="3.5" viewBox="0 0 5 3.5"><path d="M0 0H5L2.5 3.2Z" fill="#e8e8e8"/></svg>
<svg style="left:917px;top:48px;" width="15" height="14" viewBox="0 0 15 14"><path d="M0.8 0.8H12.8M0.8 13H12.8" stroke="#d8d8d8" stroke-width="0.9"/><path d="M4 0.8Q3.4 4.5 5.4 7Q7.2 9.5 5 13" stroke="#e0a060" stroke-width="1.1" fill="none"/><path d="M8.8 0.8Q8 4.5 10 7Q11.8 9.5 9.8 13" stroke="#e0a060" stroke-width="1.1" fill="none"/></svg>
<svg style="left:936px;top:54.0px;" width="5" height="3.5" viewBox="0 0 5 3.5"><path d="M0 0H5L2.5 3.2Z" fill="#e8e8e8"/></svg>
<svg style="left:885px;top:73px;" width="16" height="3" viewBox="0 0 16 3"><path d="M0.5 1.5H6M7.5 1.5H9.5M11 1.5H15.5" stroke="#c8c8c8" stroke-width="1.1"/></svg>
<svg style="left:905px;top:73.5px;" width="5" height="3.5" viewBox="0 0 5 3.5"><path d="M0 0H5L2.5 3.2Z" fill="#e8e8e8"/></svg>
<svg style="left:916px;top:67px;" width="17" height="16" viewBox="0 0 17 16"><circle cx="8.5" cy="8" r="4.8" fill="none" stroke="#d0d0d0" stroke-width="1.1"/><path d="M2 9L10 1M7 15L15 7" stroke="#6fa0e6" stroke-width="1.1"/></svg>
<svg style="left:936px;top:73.5px;" width="5" height="3.5" viewBox="0 0 5 3.5"><path d="M0 0H5L2.5 3.2Z" fill="#e8e8e8"/></svg>
<svg style="left:885px;top:87px;" width="17" height="15" viewBox="0 0 17 15"><path d="M1 2L6 6M10.5 9.5L15.5 13.5M3.5 0.5L8 4M11.5 7.5L16 11" stroke="#6fa0e6" stroke-width="1"/><path d="M5 5Q3.5 9 7.5 11.5Q11 13 12.5 10.5" stroke="#d0d0d0" stroke-width="1" fill="none"/><path d="M6 5Q9.5 2.5 12.5 6" stroke="#d0d0d0" stroke-width="1" fill="none"/></svg>
<svg style="left:909px;top:87px;" width="17" height="16" viewBox="0 0 17 16"><circle cx="10.5" cy="6" r="4.8" fill="none" stroke="#d8d8d8" stroke-width="1.1"/><path d="M10.5 1.5V10.5H13.5Q15 8 15 6Q15 4 13.5 1.8Z" fill="#6fa0e6"/><path d="M7 9.5L1.5 14.5M1.2 11.5V14.8H4.5" stroke="#d8d8d8" stroke-width="1.1" fill="none"/></svg>
<svg style="left:934px;top:88px;" width="14" height="14" viewBox="0 0 14 14"><rect x="0.5" y="0.5" width="5.2" height="5.2" fill="#6fa8f0"/><rect x="8" y="0.5" width="5.2" height="5.2" fill="#d8d8d8"/><rect x="0.5" y="8" width="5.2" height="5.2" fill="#d8d8d8"/><rect x="8" y="8" width="5.2" height="5.2" fill="#d8d8d8"/></svg>
<svg style="left:953px;top:93.0px;" width="5" height="3.5" viewBox="0 0 5 3.5"><path d="M0 0H5L2.5 3.2Z" fill="#e8e8e8"/></svg>
<svg style="left:975px;top:52px;" width="29" height="28" viewBox="0 0 29 28"><rect x="1" y="1.5" width="18" height="23" fill="#505050" stroke="#5b8cc8" stroke-width="1"/><rect x="1" y="1.5" width="18" height="2.5" fill="#6fa8f0"/><rect x="4" y="6.5" width="5.5" height="7.5" fill="#6fa8f0"/>
<g transform="translate(19.5,19.5)"><g fill="#e4e4e4"><rect x="-1.8" y="-8.2" width="3.6" height="16.4" rx="0.8"/><rect x="-1.8" y="-8.2" width="3.6" height="16.4" rx="0.8" transform="rotate(45)"/><rect x="-1.8" y="-8.2" width="3.6" height="16.4" rx="0.8" transform="rotate(90)"/><rect x="-1.8" y="-8.2" width="3.6" height="16.4" rx="0.8" transform="rotate(135)"/><circle r="6"/></g><circle r="2.6" fill="#4a4a4a"/></g></svg>
<span style="left:966px;top:80.2px;font-size:9.5px;line-height:13.5px;color:#e6e6e6;letter-spacing:-0.009px;">Настройки</span>
<svg style="left:268px;top:142px;" width="1288" height="634" viewBox="268 142 1288 634">
<defs>
<linearGradient id="bendg" gradientUnits="userSpaceOnUse" x1="875" y1="342" x2="855.7" y2="376.9">
 <stop offset="0" stop-color="#d4d4d4"/><stop offset="0.12" stop-color="#dadada"/><stop offset="0.3" stop-color="#e8e8e8"/><stop offset="0.45" stop-color="#eeeeee"/>
 <stop offset="0.58" stop-color="#e7e7e7"/><stop offset="0.75" stop-color="#d0d0d0"/><stop offset="0.9" stop-color="#bdbdbd"/><stop offset="1" stop-color="#b9b9b9"/>
</linearGradient>
<linearGradient id="redge" gradientUnits="userSpaceOnUse" x1="1240" y1="359" x2="1252" y2="338">
 <stop offset="0" stop-color="#d4d4d4"/><stop offset="0.7" stop-color="#d4d4d4"/><stop offset="0.85" stop-color="#c4c4c4"/><stop offset="1" stop-color="#868686"/>
</linearGradient>
<linearGradient id="holeg" x1="0.1" y1="0.23" x2="0.65" y2="0.96">
 <stop offset="0" stop-color="#8c8c8c"/><stop offset="0.45" stop-color="#b4b4b4"/><stop offset="1" stop-color="#d6d6d6"/>
</linearGradient>
<clipPath id="topclip"><path id="topface" d="M875 342 L1052 238 Q1060 233.4 1068 238 L1330 390.6 L1453.7 465.7 L1437.3 473.9 C1432 478 1430 485 1423 493.4 C1419 498.5 1415 501 1410.6 503.6 L1312 560 C1306 563.5 1304 565.6 1299.8 565.6 C1296 565.8 1294 565.6 1291.6 565.2 C1288 564 1286 563.2 1283.4 563.2 Z"/></clipPath>
<clipPath id="holeclip"><circle r="1" transform="matrix(26 15 0 30 910.5 475.2)"/></clipPath>
<filter id="b2" x="-20%" y="-20%" width="140%" height="140%"><feGaussianBlur stdDeviation="2"/></filter>
<filter id="b3" x="-20%" y="-20%" width="140%" height="140%"><feGaussianBlur stdDeviation="3.2"/></filter>
<filter id="b1" x="-20%" y="-20%" width="140%" height="140%"><feGaussianBlur stdDeviation="1.2"/></filter>
</defs>
<!-- side face -->
<path d="M854 370 L854 381 C846 385 838 390 832 397 C818 413 816 440 822 462 C830 495 848 528 875 555 C882 562 889 568 897 573 L1251 687 L1251 588 Z" fill="#b9b9b9"/>
<!-- right flange inner face -->
<path d="M1453 476 L1453 570.3 L1367.5 543.7 L1410 508 L1430 482 Z" fill="#bebebe"/>
<!-- top face -->
<use href="#topface" fill="#d4d4d4"/><path d="M881 340 L1288 560 L1278 567 L871 348 Z" fill="#d4d4d4"/>
<!-- right edge band -->
<g clip-path="url(#topclip)"><path d="M1040 230 L1470 478 L1440 490 L1030 255 Z" fill="url(#redge)"/></g>
<!-- recess -->
<g clip-path="url(#topclip)">
 <path d="M1200 503 L1339 423 L1452 476 L1300 580 Z" fill="#d9d9d9" filter="url(#b3)" opacity="0.55"/>
 <path d="M1290 566 L1209 514 Q1202 509 1210 504 L1330 434 Q1341 428 1352 433 L1440 474" stroke="#e6e6e6" stroke-width="7" stroke-linejoin="round" fill="none" filter="url(#b3)"/>
 <path d="M1230 518 L1333 457 L1424 500 L1300 572 Z" fill="#d9d9d9" filter="url(#b2)"/>
 <path d="M1289 561 L1226 523.5 Q1211 514.5 1224 506.5 L1322 448.5 Q1330 443.5 1338 447" stroke="#b2b2b2" stroke-width="6.5" stroke-linejoin="round" stroke-linecap="round" fill="none" filter="url(#b3)"/>
 <path d="M1219 511 L1325 447.5" stroke="#969696" stroke-width="6" stroke-linecap="round" fill="none" filter="url(#b3)"/>
 <path d="M1340 450 L1421 489" stroke="#f6f6f6" stroke-width="11" stroke-linecap="round" fill="none" filter="url(#b3)"/>
</g>
<!-- bend band -->
<path d="M875 342 L1283.4 563.2 C1269 569 1256.7 581 1250.5 596 L854 376 L854 367 C856 354 864 346 875 342 Z" fill="url(#bendg)"/>
<!-- front edge strip + flange end faces -->
<path d="M1250.5 687 L1250.5 596 C1256.7 581 1269 569 1283.4 563.2 C1286 563.2 1288 564 1291.6 565.2 C1294 565.6 1296 565.8 1299.8 565.6 C1304 565.6 1306 563.5 1312 560 L1410.6 503.6 C1415 501 1419 498.5 1423 493.4 C1430 485 1432 478 1437.3 473.9 L1453.7 465.7 Q1458 464 1461.5 465.5 Q1465 467.5 1465 471 L1465 562 L1452.5 570.3 L1452.5 484 L1450.6 482 C1443 484 1438 487 1435.3 490.3 C1432 497 1430 502 1427 505.7 C1423 510 1419 512.5 1414.7 515 L1301.8 581.6 C1297 584.5 1294 585 1291.6 584.7 C1288 584.3 1286 583.3 1283.4 582.6 C1282 581 1281 580.6 1279.3 580.6 C1273 582.5 1268.5 585 1267 586.8 Q1264 589.5 1264 593 L1264 680 Z" fill="#8f8f8f"/>
<path d="M1453 470 L1465 474" stroke="#858585" stroke-width="0.8"/>
<!-- hole -->
<circle r="1" transform="matrix(26 15 0 30 897 483)" fill="url(#holeg)"/>
<g clip-path="url(#holeclip)"><circle r="1" transform="matrix(26 15 0 30 897 483)" fill="#292929"/></g>
</svg>
<svg style="left:237px;top:129px;" width="7" height="9" viewBox="0 0 7 9"><path d="M1.5 0.8H5.5M2 0.8V5M5 0.8V5M0.5 5H6.5M3.5 5V8.5" stroke="#f0f0f0" stroke-width="1" fill="none"/></svg>
<svg style="left:249px;top:129px;" width="8" height="8" viewBox="0 0 8 8"><path d="M1 1L7 7M7 1L1 7" stroke="#f4f4f4" stroke-width="1.3"/></svg>
<svg style="left:6px;top:146px;" width="13" height="14" viewBox="0 0 13 14"><path d="M0.8 1H11.8L7.6 6V11.5L5 12.5V6Z" fill="#3a3f48" stroke="#d8d8d8" stroke-width="1"/></svg>
<svg style="left:23.5px;top:146px;" width="14" height="14" viewBox="0 0 14 14"><rect x="0.5" y="1" width="6" height="6" rx="1" fill="#f0b020" stroke="#e07818" stroke-width="0.9"/><rect x="1.8" y="2.2" width="2.6" height="2.4" fill="#ffe080"/><path d="M3.5 8V13M3.5 10H6M3.5 12.5H6" stroke="#8a8a8a" stroke-width="0.9" fill="none"/><path d="M7.5 3.5L12 7" stroke="#4040c8" stroke-width="1.2"/><path d="M12.8 7.8L9.8 7.6L12 5.2Z" fill="#4040c8"/></svg>
<svg style="left:41.5px;top:146px;" width="14" height="14" viewBox="0 0 14 14"><rect x="0.5" y="1" width="6" height="6" rx="1" fill="#f0b020" stroke="#e07818" stroke-width="0.9"/><rect x="1.8" y="2.2" width="2.6" height="2.4" fill="#ffe080"/><path d="M3.5 8V13M3.5 10H6M3.5 12.5H6" stroke="#8a8a8a" stroke-width="0.9" fill="none"/><path d="M7.5 3.5L12 7" stroke="#4040c8" stroke-width="1.2"/><path d="M12.8 7.8L9.8 7.6L12 5.2Z" fill="#4040c8"/><circle cx="6.3" cy="10.3" r="3" fill="#e02020"/><rect x="5.8" y="8.4" width="1.1" height="2.4" fill="#fff"/><rect x="5.8" y="11.3" width="1.1" height="1" fill="#fff"/></svg>
<svg style="left:59.5px;top:146px;" width="14" height="14" viewBox="0 0 14 14"><rect x="0.5" y="1" width="6" height="6" rx="1" fill="#f0b020" stroke="#e07818" stroke-width="0.9"/><rect x="1.8" y="2.2" width="2.6" height="2.4" fill="#ffe080"/><path d="M3.5 8V13M3.5 10H6M3.5 12.5H6" stroke="#8a8a8a" stroke-width="0.9" fill="none"/><path d="M8 3L12.5 6.5" stroke="#5050c8" stroke-width="1.2"/><path d="M7 2.2L10 2.4L8 4.8Z" fill="#5050c8"/></svg>
<svg style="left:78px;top:146px;" width="12" height="14" viewBox="0 0 12 14"><path d="M10.5 5.5Q8.5 1.5 4.5 2.2Q2 3 1.5 5.5L0.3 5.2L2 8L4.8 6L3.5 5.7Q4.5 4 6.5 4.2Q8 4.5 8.8 6Z" fill="#2f7fe8"/><path d="M1.5 8.5Q3.5 12.5 7.5 11.8Q10 11 10.5 8.5L11.7 8.8L10 6L7.2 8L8.5 8.3Q7.5 10 5.5 9.8Q4 9.5 3.2 8Z" fill="#1f5fc0"/></svg>
<svg style="left:95px;top:146px;" width="13" height="14" viewBox="0 0 13 14"><rect x="0.5" y="2" width="6" height="10.5" fill="#a0a0a0"/><rect x="1.5" y="0.8" width="4" height="2" fill="#b8b8b8"/><rect x="6.5" y="5.5" width="5" height="7" fill="#b0b0b0"/><path d="M1.5 5H5.5M1.5 8H5.5M7.5 8H10.5M7.5 10.5H10.5" stroke="#7a7a7a" stroke-width="1"/></svg>
<svg style="left:113px;top:146px;" width="13" height="14" viewBox="0 0 13 14"><rect x="0.5" y="2.5" width="7" height="10" fill="#a0a0a0"/><rect x="2" y="0.8" width="5" height="2.5" fill="#b8b8b8"/><rect x="7.5" y="5" width="4.5" height="7.5" fill="#b0b0b0"/><path d="M1.5 5.5H6.5M1.5 8.5H11M1.5 11H11" stroke="#7a7a7a" stroke-width="1"/></svg>
<svg style="left:131px;top:146px;" width="13" height="14" viewBox="0 0 13 14"><rect x="0.5" y="2.5" width="9.5" height="10" fill="#e4e4e4"/><rect x="6" y="0.5" width="6.5" height="5" fill="#c8c8c8"/><path d="M1.5 5.5H9M1.5 8H9M1.5 10.5H9M4 5.5V12" stroke="#7a7a7a" stroke-width="0.9"/><path d="M3 4L5 5.5L9 1.5" stroke="#6a6a6a" stroke-width="1" fill="none"/></svg>
<svg style="left:244px;top:147px;" width="12" height="12" viewBox="0 0 12 12"><circle cx="6" cy="6" r="5.6" fill="#9fd4f4"/><text x="6" y="9.3" font-size="9" font-weight="bold" font-family="Liberation Sans" fill="#1f5fa8" text-anchor="middle">?</text></svg>
<svg style="left:11.5px;top:171.4px;" width="4.5" height="7" viewBox="0 0 4.5 7"><path d="M0.3 0.2L3.9 3.5L0.3 6.8Z" fill="#ececec"/></svg>
<svg style="left:25px;top:170.5px;" width="12" height="12" viewBox="0 0 12 12"><path d="M0.5 1.5H4.5L5.8 3H11V11.5H0.5Z" fill="#f0c070"/><path d="M0.5 4.5H11.5V11.5H0.5Z" fill="#fbe0a0"/><path d="M0.5 11H11.5" stroke="#e0a050" stroke-width="1"/></svg>
<span style="left:40.5px;top:169.1px;font-size:9.75px;line-height:13.75px;color:#f2f2f2;letter-spacing:-0.025px;">ГСК</span>
<svg style="left:11px;top:187.5px;" width="6" height="6" viewBox="0 0 6 6"><path d="M5.2 0.8V5.2H0.8Z" fill="#f0f0f0"/></svg>
<svg style="left:24px;top:184.5px;" width="14" height="12" viewBox="0 0 14 12"><path d="M1 1.5L4.5 0.5V6H9.5V0.8L13 0.5V9L10.5 11.5H1Z" fill="#f8d020"/><path d="M1 9.5L3 11.5H10.5L13 9" stroke="#c89800" stroke-width="1" fill="none"/><path d="M4.5 6H9.5" stroke="#c89800" stroke-width="0.8"/></svg>
<span style="left:41px;top:183.9px;font-size:9.5px;line-height:13.5px;color:#f2f2f2;letter-spacing:-0.096px;">Защелка 10П205-00-001</span>
<svg style="left:41px;top:199.39999999999998px;" width="12" height="12.5" viewBox="0 0 12 12.5"><rect x="0.4" y="0.4" width="11" height="11.6" fill="#f4f4f4" stroke="#c0c0c0" stroke-width="0.6"/><path d="M2 2V10H10" stroke="#505050" stroke-width="1" fill="none"/><path d="M3.2 8.8L9.8 1.5V7Z" fill="#b8b8b8"/></svg>
<span style="left:56px;top:199.1px;font-size:9.5px;line-height:13.5px;color:#f2f2f2;letter-spacing:-0.148px;">2D Эскиз</span>
<svg style="left:27px;top:215.0px;" width="4.5" height="7" viewBox="0 0 4.5 7"><path d="M0.3 0.2L3.9 3.5L0.3 6.8Z" fill="#ececec"/></svg>
<svg style="left:40px;top:214px;" width="14" height="11" viewBox="0 0 14 11"><path d="M0.5 5L4 0.8L13 3L13.5 6.5L10 10L1 7.5Z" fill="#1fb0e0"/><path d="M0.5 5L4 0.8L13 3L9.5 6.8Z" fill="#48d0f4"/></svg>
<span style="left:56px;top:212.8px;font-size:9.75px;line-height:13.75px;color:#f2f2f2;letter-spacing:-0.023px;">Листовое тело</span>
<svg style="left:41px;top:227.89999999999998px;" width="12" height="12.5" viewBox="0 0 12 12.5"><rect x="0.4" y="0.4" width="11" height="11.6" fill="#f4f4f4" stroke="#c0c0c0" stroke-width="0.6"/><path d="M2 2V10H10" stroke="#505050" stroke-width="1" fill="none"/><path d="M3.2 8.8L9.8 1.5V7Z" fill="#b8b8b8"/></svg>
<span style="left:56px;top:227.4px;font-size:9.5px;line-height:13.5px;color:#f2f2f2;letter-spacing:-0.161px;">2D Эскиз (1)</span>
<svg style="left:41px;top:242.89999999999998px;" width="12" height="12.5" viewBox="0 0 12 12.5"><rect x="0.4" y="0.4" width="11" height="11.6" fill="#f4f4f4" stroke="#c0c0c0" stroke-width="0.6"/><path d="M2 2V10H10" stroke="#505050" stroke-width="1" fill="none"/><path d="M3.2 8.8L9.8 1.5V7Z" fill="#b8b8b8"/></svg>
<span style="left:56px;top:242.6px;font-size:9.5px;line-height:13.5px;color:#f2f2f2;letter-spacing:-0.161px;">2D Эскиз (2)</span>
<svg style="left:27px;top:258.7px;" width="4.5" height="7" viewBox="0 0 4.5 7"><path d="M0.3 0.2L3.9 3.5L0.3 6.8Z" fill="#ececec"/></svg>
<svg style="left:40px;top:257.5px;" width="14" height="13.5" viewBox="0 0 14 13.5"><path d="M4.5 0.5L12.5 3V10.5L6 8Z" fill="#1f9fd8"/><path d="M4.5 0.5L6 8L3.5 9L2.8 2Z" fill="#48c8f0"/><path d="M0.5 10L6 8L12.5 10.5L8 13Z" fill="#8a8a8a"/><path d="M1 10.3L7.8 12.6" stroke="#d8c850" stroke-width="0.9"/><path d="M0.8 8.5L5.5 7" stroke="#5a5a5a" stroke-width="1.3"/></svg>
<span style="left:56.5px;top:256.9px;font-size:9.75px;line-height:13.75px;color:#f2f2f2;letter-spacing:-0.017px;">Сгиб по линии (1)</span>
<svg style="left:27px;top:273.2px;" width="4.5" height="7" viewBox="0 0 4.5 7"><path d="M0.3 0.2L3.9 3.5L0.3 6.8Z" fill="#ececec"/></svg>
<svg style="left:40px;top:272.0px;" width="14" height="13.5" viewBox="0 0 14 13.5"><path d="M4.5 0.5L12.5 3V10.5L6 8Z" fill="#1f9fd8"/><path d="M4.5 0.5L6 8L3.5 9L2.8 2Z" fill="#48c8f0"/><path d="M0.5 10L6 8L12.5 10.5L8 13Z" fill="#8a8a8a"/><path d="M1 10.3L7.8 12.6" stroke="#d8c850" stroke-width="0.9"/><path d="M0.8 8.5L5.5 7" stroke="#5a5a5a" stroke-width="1.3"/></svg>
<span style="left:56.5px;top:271.3px;font-size:9.75px;line-height:13.75px;color:#f2f2f2;letter-spacing:-0.017px;">Сгиб по линии (2)</span>
<svg style="left:41px;top:286.7px;" width="12" height="12.5" viewBox="0 0 12 12.5"><rect x="0.4" y="0.4" width="11" height="11.6" fill="#f4f4f4" stroke="#c0c0c0" stroke-width="0.6"/><path d="M2 2V10H10" stroke="#505050" stroke-width="1" fill="none"/><path d="M3.2 8.8L9.8 1.5V7Z" fill="#b8b8b8"/></svg>
<span style="left:56px;top:286.4px;font-size:9.5px;line-height:13.5px;color:#f2f2f2;letter-spacing:-0.161px;">2D Эскиз (3)</span>
<svg style="left:27px;top:302.7px;" width="4.5" height="7" viewBox="0 0 4.5 7"><path d="M0.3 0.2L3.9 3.5L0.3 6.8Z" fill="#ececec"/></svg>
<svg style="left:41px;top:301px;" width="11" height="14" viewBox="0 0 11 14"><path d="M6 0.3L1 7.5H4.8L2.5 13.5L9.8 5.5H5.8L9 0.3Z" fill="#f8d838" stroke="#e0a010" stroke-width="0.5"/></svg>
<svg style="left:52.5px;top:301.5px;" width="14" height="13" viewBox="0 0 14 13"><path d="M1 1H9.5L13.5 3V9.5L9 12.5H4L0.5 9.5Z" fill="#18a8d8"/><path d="M1 1H9.5L13.5 3L11 6H3Z" fill="#40c8f0"/><ellipse cx="8.3" cy="3.8" rx="2.7" ry="1.7" fill="#b0e8f8"/></svg>
<span style="left:69.5px;top:300.9px;font-size:9.5px;line-height:13.5px;color:#f2f2f2;letter-spacing:0.066px;">Штамповка</span>
<svg style="left:40px;top:316px;" width="14" height="13" viewBox="0 0 14 13"><circle cx="3.6" cy="2.6" r="1.9" fill="none" stroke="#909090" stroke-width="1.2"/><path d="M5.5 2.6H10.5M8.5 2.6V4.2" stroke="#909090" stroke-width="1"/><path d="M2.5 7L13.5 6.5L11 9H0.5Z" fill="#a8a8a8"/><path d="M0.5 9.5H11L13.5 7.5V10L11 12.5H0.5Z" fill="#8c8c8c"/><path d="M6.5 7V12" stroke="#6a6a6a" stroke-width="0.8"/></svg>
<span style="left:56.5px;top:315.9px;font-size:9.5px;line-height:13.5px;color:#9c9c9c;letter-spacing:-0.151px;text-decoration:line-through;">Развертка</span>
<svg style="left:40px;top:330px;" width="13" height="13" viewBox="0 0 13 13"><defs><radialGradient id="rg1" cx="0.4" cy="0.3" r="0.8"><stop offset="0" stop-color="#ff6a5a"/><stop offset="1" stop-color="#c81010"/></radialGradient></defs><circle cx="6.2" cy="6.4" r="5.9" fill="url(#rg1)"/><rect x="2.5" y="5.2" width="7.4" height="2.4" fill="#ffffff"/></svg>
<span style="left:56.5px;top:329.6px;font-size:9.75px;line-height:13.75px;color:#f2f2f2;letter-spacing:0.013px;">Конец построений</span>
<svg style="left:346px;top:209px;" width="12" height="12" viewBox="0 0 12 12"><defs><linearGradient id="tig" x1="0.2" y1="0" x2="0.6" y2="1"><stop offset="0" stop-color="#48c8ea"/><stop offset="1" stop-color="#3a8fd0"/></linearGradient></defs><path d="M3.5 0.3H10.6Q11.4 0.3 11.4 1.1V8Q11.4 11.7 7.8 11.7H1.1Q0.3 11.7 0.3 10.9V3.5Q0.3 0.3 3.5 0.3Z" fill="url(#tig)"/><circle cx="5.8" cy="6" r="3" fill="none" stroke="#f2fbff" stroke-width="1.5" stroke-dasharray="1.3 1.05"/><circle cx="5.8" cy="6" r="2.3" fill="#f2fbff"/><circle cx="5.8" cy="6" r="0.9" fill="#3f9fd8"/></svg>
<span style="left:362.5px;top:208.6px;font-size:9.75px;line-height:13.75px;color:#a0a0a0;letter-spacing:-0.024px;">Штамповка</span>
<svg style="left:701px;top:210px;" width="9" height="9" viewBox="0 0 9 9"><path d="M0.8 0.8L8.2 8.2M8.2 0.8L0.8 8.2" stroke="#9c9c9c" stroke-width="1"/></svg>
<div style="left:347px;top:238px;width:17px;height:16px;background:#e2e2e2;border:1px solid #8a8a8a;box-sizing:border-box;"></div>
<div style="left:348px;top:239px;width:15px;height:14px;border:1px solid #c8c8c8;box-sizing:border-box;"></div>
<svg style="left:351px;top:240px;" width="9" height="13" viewBox="0 0 9 13"><path d="M1 0.8V10L3.3 8L5 11.8L6.6 11.1L5 7.4L8 7.2Z" fill="#ffffff" stroke="#101010" stroke-width="1.3" stroke-linejoin="round"/></svg>
<span style="left:370px;top:239.8px;font-size:9.5px;line-height:13.5px;color:#262626;letter-spacing:0.018px;">Эскиз</span>
<div style="left:347.5px;top:267px;width:360.5px;height:370px;box-sizing:border-box;border:1px solid #e1e5e9;border-radius:3px;box-shadow:inset 1px 1px 0 #fbfbfb, 1px 1px 0 #fbfbfb;"></div>
<div style="left:352px;top:262px;width:56px;height:12px;background:#f0f0f0;"></div>
<span style="left:354.5px;top:261.1px;font-size:9.5px;line-height:13.5px;color:#262626;letter-spacing:-0.016px;">Параметры</span>
<span style="left:365.5px;top:285.2px;font-size:9.5px;line-height:13.5px;color:#262626;letter-spacing:0.042px;">Вид штамповки</span>
<svg style="left:443.8px;top:285.6px;" width="12" height="12" viewBox="0 0 12 12"><circle cx="6" cy="6" r="4.6" fill="#ffffff" stroke="#5a5a5a" stroke-width="0.8"/><circle cx="6" cy="6" r="2.3" fill="#202020"/></svg>
<span style="left:459.4px;top:285.2px;font-size:9.5px;line-height:13.5px;color:#262626;letter-spacing:-0.121px;">Закрытая</span>
<svg style="left:510px;top:285.6px;" width="12" height="12" viewBox="0 0 12 12"><circle cx="6" cy="6" r="4.6" fill="#ffffff" stroke="#5a5a5a" stroke-width="0.8"/></svg>
<span style="left:525.6px;top:285.2px;font-size:9.5px;line-height:13.5px;color:#262626;letter-spacing:0.040px;">Открытая</span>
<span style="left:365.5px;top:307.6px;font-size:9.5px;line-height:13.5px;color:#262626;letter-spacing:0.023px;">Тип высоты</span>
<div style="left:444px;top:305px;width:256px;height:17px;box-sizing:border-box;border:1px solid #adadad;background:linear-gradient(#ebebeb,#dedede);"></div>
<span style="left:448.6px;top:307.1px;font-size:9.75px;line-height:13.75px;color:#262626;letter-spacing:-0.041px;">Полный</span>
<svg style="left:689.5px;top:311.5px;" width="6" height="4" viewBox="0 0 6 4"><path d="M0.6 0.6L3 3L5.4 0.6" stroke="#404040" stroke-width="1" fill="none"/></svg>
<span style="left:365.5px;top:326.9px;font-size:9.5px;line-height:13.5px;color:#262626;letter-spacing:-0.188px;">Высота</span>
<div style="left:444px;top:326.5px;width:240px;height:13.0px;background:#ffffff;border:1px solid #a8a8a8;box-sizing:border-box;"></div>
<span style="left:446.3px;top:326.4px;font-size:9.75px;line-height:13.75px;color:#262626;">1.5</span>
<span style="left:365.5px;top:343.7px;font-size:9.75px;line-height:13.75px;color:#262626;letter-spacing:-0.053px;">Толщина</span>
<span style="left:365.5px;top:356.7px;font-size:9.75px;line-height:13.75px;color:#262626;letter-spacing:0.013px;">боковых стенок</span>
<span style="left:365.5px;top:369.9px;font-size:9.5px;line-height:13.5px;color:#262626;letter-spacing:0.003px;">внутри</span>
<div style="left:445px;top:357px;width:11px;height:11px;background:#ffffff;border:1px solid #3a3a3a;box-sizing:border-box;"></div>
<svg style="left:446px;top:358px;" width="9" height="9" viewBox="0 0 9 9"><path d="M1.5 4.5L3.6 6.8L7.6 1.6" stroke="#202020" stroke-width="1.3" fill="none"/></svg>
<span style="left:365.5px;top:385.9px;font-size:9.5px;line-height:13.5px;color:#262626;letter-spacing:0.014px;">Направление</span>
<span style="left:365.5px;top:398.9px;font-size:9.75px;line-height:13.75px;color:#262626;letter-spacing:0.011px;">штамповки</span>
<svg style="left:443.8px;top:391.7px;" width="12" height="12" viewBox="0 0 12 12"><circle cx="6" cy="6" r="4.6" fill="#ffffff" stroke="#5a5a5a" stroke-width="0.8"/></svg>
<span style="left:459.4px;top:391.7px;font-size:9.75px;line-height:13.75px;color:#262626;letter-spacing:-0.046px;">Наружу</span>
<svg style="left:502.8px;top:391.7px;" width="12" height="12" viewBox="0 0 12 12"><circle cx="6" cy="6" r="4.6" fill="#ffffff" stroke="#5a5a5a" stroke-width="0.8"/><circle cx="6" cy="6" r="2.3" fill="#202020"/></svg>
<span style="left:518.4px;top:391.9px;font-size:9.5px;line-height:13.5px;color:#262626;letter-spacing:-0.055px;">Внутрь</span>
<span style="left:365.5px;top:415.9px;font-size:9.5px;line-height:13.5px;color:#262626;letter-spacing:0.054px;">Угол</span>
<div style="left:444px;top:415.5px;width:240px;height:13.5px;background:#ffffff;border:1px solid #a8a8a8;box-sizing:border-box;"></div>
<span style="left:446.3px;top:415.7px;font-size:9.75px;line-height:13.75px;color:#262626;">0</span>
<span style="left:365.5px;top:433.8px;font-size:9.5px;line-height:13.5px;color:#262626;letter-spacing:-0.342px;">Радиус</span>
<span style="left:365.5px;top:446.4px;font-size:9.75px;line-height:13.75px;color:#262626;letter-spacing:-0.020px;">скругления</span>
<span style="left:365.5px;top:458.9px;font-size:9.5px;line-height:13.5px;color:#262626;letter-spacing:-0.034px;">эскиза</span>
<div style="left:444px;top:445px;width:240px;height:14.5px;background:#ffffff;border:1px solid #a8a8a8;box-sizing:border-box;"></div>
<span style="left:446.3px;top:445.7px;font-size:9.75px;line-height:13.75px;color:#262626;">1</span>
<span style="left:365.5px;top:475.2px;font-size:9.5px;line-height:13.5px;color:#262626;letter-spacing:0.015px;">Базовый радиус</span>
<span style="left:365.5px;top:487.8px;font-size:9.75px;line-height:13.75px;color:#262626;letter-spacing:-0.020px;">скругления</span>
<div style="left:444px;top:480px;width:240px;height:14.5px;background:#ffffff;border:1px solid #a8a8a8;box-sizing:border-box;"></div>
<span style="left:446.3px;top:480.7px;font-size:9.75px;line-height:13.75px;color:#262626;">0</span>
<span style="left:365.5px;top:504.1px;font-size:9.75px;line-height:13.75px;color:#262626;letter-spacing:0.045px;">Нижний радиус</span>
<span style="left:365.5px;top:516.8px;font-size:9.75px;line-height:13.75px;color:#262626;letter-spacing:-0.020px;">скругления</span>
<div style="left:444px;top:509px;width:240px;height:14.5px;background:#ffffff;border:1px solid #a8a8a8;box-sizing:border-box;"></div>
<span style="left:446.3px;top:509.7px;font-size:9.75px;line-height:13.75px;color:#262626;">1</span>
<svg style="left:349.5px;top:661.5px;" width="13" height="13" viewBox="0 0 13 13"><circle cx="6.3" cy="6.3" r="5.3" fill="#d8f0fc" stroke="#3f9fd8" stroke-width="1"/><text x="6.3" y="9.4" font-size="8.5" font-weight="bold" font-family="Liberation Sans" fill="#2f8fd0" text-anchor="middle">?</text></svg>
<div style="left:584.5px;top:658.5px;width:60.5px;height:18.5px;background:#e1e1e1;border:1px solid #a0a0a0;box-sizing:border-box;"></div>
<span style="left:608px;top:661.2px;font-size:9.5px;line-height:13.5px;color:#262626;letter-spacing:-0.119px;">OK</span>
<div style="left:648.5px;top:658.5px;width:61px;height:18.5px;background:#e1e1e1;border:1px solid #adadad;box-sizing:border-box;"></div>
<span style="left:661.5px;top:661.2px;font-size:9.5px;line-height:13.5px;color:#262626;letter-spacing:0.069px;">Отмена</span>
<div style="left:273px;top:147px;width:21px;height:12px;background:#3c3c3c;border-radius:6.0px;"></div>
<span style="left:280.5px;top:146.5px;font-size:9px;line-height:13px;color:#707070;">+</span>
<div style="left:297px;top:147px;width:108px;height:12px;background:#3c3c3c;border-radius:6.0px;"></div>
<span style="left:304px;top:146.8px;font-size:9.0px;line-height:13.0px;color:#707070;letter-spacing:-0.134px;">ЮВ изометрия, сверху</span>
<div style="left:408px;top:147px;width:76.5px;height:12px;background:#3c3c3c;border-radius:6.0px;"></div>
<span style="left:416px;top:146.8px;font-size:9.0px;line-height:13.0px;color:#707070;letter-spacing:-0.078px;">Тонированный</span>
<div style="left:487.5px;top:147px;width:122.5px;height:12px;background:#3c3c3c;border-radius:6.0px;"></div>
<span style="left:495px;top:146.8px;font-size:9.0px;line-height:13.0px;color:#707070;letter-spacing:-0.163px;">— нет связанных видов —</span>
<svg style="left:1405px;top:150px;" width="146" height="146" viewBox="0 0 146 146"><g fill="none" stroke="#6c6c6c" stroke-width="1"><circle cx="72.7" cy="72.1" r="65.9"/><circle cx="72.7" cy="72.1" r="43.3"/><path d="M6.8 72.1H138.6M72.7 6.2V138"/></g><circle cx="91" cy="91" r="4.3" fill="#b08660"/></svg>
<div style="left:1423px;top:288px;width:108px;height:13px;background:#474747;border-radius:6.5px;"></div>
<span style="left:1430.5px;top:288.3px;font-size:9.0px;line-height:13.0px;color:#9c9c9c;letter-spacing:-0.109px;">ЮВ изометрия, сверху</span>
<svg style="left:268px;top:142px;" width="1288" height="634" viewBox="268 142 1288 634">
<g stroke="#c4c4c4" stroke-width="1" fill="none"><path d="M1264.6 223.5V285M1237.4 238.7L1291.8 270.3M1237.4 270.3L1291.8 238.7"/></g>
<path d="M961.3 282V222" stroke="#1c1ca0" stroke-width="1.5"/>
<path d="M961.3 215.5L957 238H965.6Z" fill="#10108c" stroke="#2020c0" stroke-width="0.8"/><path d="M961.3 215.5V238" stroke="#2020c0" stroke-width="0.8"/>
<path d="M967.5 286.2L1008 263" stroke="#22e022" stroke-width="1.3"/>
<path d="M1026 252.6L1005.2 258.3L1009.4 265.8Z M1026 252.6L1007.3 262" fill="none" stroke="#22e022" stroke-width="1"/>
<path d="M1026 252.6L1006.5 259.8L1011 262.5Z" fill="none" stroke="#22e022" stroke-width="0.8"/>
<path d="M967.5 294L1008 317" stroke="#e82020" stroke-width="1.2"/>
<path d="M1025.6 327L1009.4 313.6L1005.2 321.2Z M1025.6 327L1007.3 317.4" fill="none" stroke="#e82020" stroke-width="1"/>
<path d="M1025.6 327L1011 317L1006.5 319.8Z" fill="none" stroke="#e82020" stroke-width="0.8"/>
<g stroke="#f4f4f4" stroke-width="1" fill="none"><path d="M948.2 290L961.2 282.2L974 290L961.2 297.8Z"/><path d="M954.7 286.1L967.6 293.9M967.6 286.1L954.7 293.9"/></g>
<g stroke="#d0d0d0" stroke-width="1.2" fill="none"><path d="M957 196.5H966.5L957 206H966.8"/></g><g stroke="#ffffff" stroke-width="1.2" fill="none"><path d="M1033.5 240.5L1038.5 245.5L1043.5 240.5M1038.5 245.5V251.5"/><path d="M1033.8 330.2L1043.2 339.6M1043.2 330.2L1033.8 339.6"/><path d="M1108.5 358.2H1116M1112.3 354.5V362"/></g>
</svg>
<div style="left:1088px;top:859px;width:1px;height:15px;background:#5c5c5c;"></div>
<div style="left:1106px;top:859px;width:1px;height:15px;background:#5c5c5c;"></div>
<div style="left:1196px;top:859px;width:1px;height:15px;background:#5c5c5c;"></div>
<div style="left:1214px;top:859px;width:1px;height:15px;background:#5c5c5c;"></div>
<div style="left:1280px;top:859px;width:1px;height:15px;background:#5c5c5c;"></div>
<div style="left:1303px;top:859px;width:1px;height:15px;background:#5c5c5c;"></div>
<div style="left:1377px;top:859px;width:1px;height:15px;background:#5c5c5c;"></div>
<div style="left:1399px;top:859px;width:1px;height:15px;background:#5c5c5c;"></div>
<div style="left:1423px;top:859px;width:1px;height:15px;background:#5c5c5c;"></div>
<div style="left:1446px;top:859px;width:1px;height:15px;background:#5c5c5c;"></div>
<div style="left:1470px;top:859px;width:1px;height:15px;background:#5c5c5c;"></div>
<div style="left:1493px;top:859px;width:1px;height:15px;background:#5c5c5c;"></div>
<div style="left:1517px;top:859px;width:1px;height:15px;background:#5c5c5c;"></div>
<div style="left:1535px;top:859px;width:1px;height:15px;background:#5c5c5c;"></div>
<svg style="left:1091px;top:860px;" width="13" height="12" viewBox="0 0 13 12"><rect x="0.6" y="6" width="5.5" height="4.5" rx="0.8" fill="none" stroke="#c8c8c8" stroke-width="1"/><path d="M1.8 6V4.5Q1.8 3 3.3 3Q4.8 3 4.8 4.5V6" fill="none" stroke="#c8c8c8" stroke-width="1"/><rect x="6.6" y="3.8" width="5.5" height="4.5" rx="0.8" fill="none" stroke="#c8c8c8" stroke-width="1"/><path d="M7.8 3.8V2.3Q7.8 0.8 9.3 0.8Q10.8 0.8 10.8 2.3" fill="none" stroke="#c8c8c8" stroke-width="1"/></svg>
<svg style="left:1108px;top:860px;" width="11" height="12" viewBox="0 0 11 12"><rect x="0.3" y="0.3" width="10" height="8.5" fill="#d4d4d4"/><path d="M3 8.8H8.4L5.7 11.6Z" fill="#ececec" stroke="#4a4a4a" stroke-width="0.6"/></svg>
<svg style="left:1198px;top:859px;" width="14" height="14" viewBox="0 0 14 14"><circle cx="4.2" cy="3.6" r="3.2" fill="#f4eeb0"/><rect x="2.8" y="6.6" width="2.8" height="2.2" fill="#c8c8c8"/><path d="M6.5 1H12.5V4M1.5 9.5V12.5H7" stroke="#c8c8c8" stroke-width="0.9" fill="none"/><path d="M8.2 5.2V12.5L9.9 11L11 13.6L12.2 13L11.1 10.5L13.3 10.3Z" fill="#ffffff" stroke="#444" stroke-width="0.4"/></svg>
<svg style="left:1218px;top:859px;" width="10" height="14" viewBox="0 0 10 14"><path d="M4.7 0.5Q9 0.7 9 4.8Q9 6.8 6.9 8.6V10.4H2.5V8.6Q0.4 6.8 0.4 4.8Q0.4 0.7 4.7 0.5Z" fill="#dcdcdc"/><rect x="2.8" y="10.8" width="3.8" height="2.4" fill="#9a9a9a"/></svg>
<div style="left:1232px;top:857px;width:24px;height:17.5px;background:#48648e;border:1px solid #6888b8;box-sizing:border-box;"></div>
<svg style="left:1239px;top:859px;" width="14" height="14" viewBox="0 0 14 14"><circle cx="7" cy="7.2" r="5.5" fill="none" stroke="#d83838" stroke-width="1.3"/><path d="M3.2 3.2L10.8 11" stroke="#d83838" stroke-width="1.1"/><path d="M6 3V10L7.6 8.7L8.6 11L9.7 10.5L8.7 8.3L10.6 8.1Z" fill="#ffffff" stroke="#803030" stroke-width="0.4"/></svg>
<svg style="left:1263px;top:859px;" width="14" height="14" viewBox="0 0 14 14"><path d="M1 0.8V10L3.2 8.2L4.8 11.6L6.4 10.9L4.9 7.6L7.8 7.3Z" fill="#ffffff" stroke="#333" stroke-width="0.5"/><rect x="6.8" y="8" width="6.4" height="5" fill="#4a4a4a" stroke="#e8e8e8" stroke-width="1"/><path d="M7 9.6H13" stroke="#e8e8e8" stroke-width="1"/></svg>
<svg style="left:1286px;top:859px;" width="14" height="14" viewBox="0 0 14 14"><path d="M2.5 0.8V11.5H13" stroke="#d0d0d0" stroke-width="1" fill="none"/><path d="M0.8 2.8L2.5 0.6L4.2 2.8M11 9.8L13.2 11.5L11 13.2" stroke="#d0d0d0" stroke-width="0.9" fill="none"/><path d="M9.5 0.8L6.8 5.6H9L7.6 9.4L11.6 4.2H9.2L11 0.8Z" fill="#d8d8d8"/></svg>
<svg style="left:1383px;top:859px;" width="13" height="13" viewBox="0 0 13 13"><path d="M3 12.5Q0.8 9.5 0.5 7.2Q0.6 6.2 1.6 6.6L3 8.5V2.5Q3.1 1.6 3.9 1.6Q4.7 1.6 4.8 2.5V1.4Q4.9 0.5 5.7 0.5Q6.5 0.5 6.6 1.4V2Q6.7 1.1 7.5 1.1Q8.3 1.1 8.4 2V3Q8.5 2.2 9.3 2.2Q10.1 2.2 10.2 3V8.5Q10.2 11 8.8 12.5Z" fill="#ffffff"/><path d="M4.8 2.5V6M6.6 2V6M8.4 3V6" stroke="#8a8a8a" stroke-width="0.5"/></svg>
<svg style="left:1408px;top:859px;" width="13" height="14" viewBox="0 0 13 14"><circle cx="5" cy="5.3" r="4.3" fill="#cfe8f8" stroke="#e8f4ff" stroke-width="0.8"/><path d="M8 8.5L12 12.8" stroke="#6a9be0" stroke-width="2"/></svg>
<div style="left:1430.5px;top:859px;width:13.5px;height:13px;background:#5b9bea;"></div>
<svg style="left:1431px;top:859.5px;" width="13" height="12" viewBox="0 0 13 12"><circle cx="6" cy="5.5" r="3.4" fill="none" stroke="#1f4f98" stroke-width="1.1"/><path d="M8.4 8L11.5 11.2" stroke="#1f4f98" stroke-width="1.3"/></svg>
<svg style="left:1453.5px;top:859px;" width="14" height="14" viewBox="0 0 14 14"><path d="M0.8 10.5V0.8H11V5" stroke="#8fb8f0" stroke-width="1.1" fill="none"/><path d="M0.8 1.2H11" stroke="#5b9bea" stroke-width="1.4"/><circle cx="9" cy="8.6" r="2.8" fill="none" stroke="#e0e0e0" stroke-width="1"/><path d="M11 10.7L13.4 13.2" stroke="#e0e0e0" stroke-width="1.2"/></svg>
<svg style="left:1477px;top:859px;" width="15" height="14" viewBox="0 0 15 14"><ellipse cx="7.3" cy="7.8" rx="6.4" ry="3" fill="none" stroke="#c8c8c8" stroke-width="1"/><path d="M7.3 1V13" stroke="#c8c8c8" stroke-width="1"/><path d="M5.6 2.6L7.3 0.6L9 2.6" stroke="#c8c8c8" stroke-width="0.9" fill="none"/><path d="M10.5 11.6L12.5 10L10.3 9.2" stroke="#c8c8c8" stroke-width="0.9" fill="none"/></svg>
<svg style="left:1502px;top:859.5px;" width="12" height="13" viewBox="0 0 12 13"><path d="M10.6 5Q9.3 1.2 5.6 1.5Q2.6 2 1.6 4.8" stroke="#8fe048" stroke-width="1.8" fill="none"/><path d="M0.2 3.8L1.8 7L4.2 4.6Z" fill="#8fe048"/><path d="M1.2 7.8Q2.5 11.6 6.2 11.3Q9.2 10.8 10.2 8" stroke="#8fe048" stroke-width="1.8" fill="none"/><path d="M11.6 9L10 5.8L7.6 8.2Z" fill="#8fe048"/></svg>
<svg style="left:1519px;top:859px;" width="13" height="13" viewBox="0 0 13 13"><path d="M0.6 8V0.8H8.5V3" stroke="#e0e0e0" stroke-width="1" fill="none"/><path d="M0.6 1.3H8.5" stroke="#e0e0e0" stroke-width="1.4"/><rect x="5.2" y="7" width="7" height="5.2" fill="#e0e0e0"/><path d="M6.8 7V5.6Q6.8 4 8.7 4Q10.6 4 10.6 5.6V7" fill="none" stroke="#e0e0e0" stroke-width="1"/></svg>
<svg style="left:1542px;top:859px;" width="14" height="14" viewBox="0 0 14 14"><rect x="3" y="3.2" width="8" height="6.8" fill="#1f9fe8"/><path d="M0.6 3.5V0.8H3.5M10.5 0.8H13.4V3.5M13.4 9.8V12.6H10.5M3.5 12.6H0.6V9.8" stroke="#e8e8e8" stroke-width="1.1" fill="none"/></svg>
<span style="left:18px;top:843.0px;font-size:9.5px;line-height:13.5px;color:#d8d8d8;font-family:'Liberation Mono',monospace;letter-spacing:-0.029px;text-underline-offset:1.5px;">Введите значение или [<u>Эскиз</u>/<u>Вид штамповки</u>/<u>Тип высоты</u>/<u>Высота</u>/<u>Толщина боковых стенок внутри</u>/<u>Направление штамповки</u>/<u>Угол</u>/<u>Радиус скругления эскиза</u>/<u>Базовый радиус скругления</u>/<u>Нижний радиус скругления</u>/<u>Отмена</u>/<u>Закончить</u>]:</span>
<svg style="left:4.5px;top:805px;" width="8" height="8" viewBox="0 0 8 8"><path d="M1 1L7 7M7 1L1 7" stroke="#f4f4f4" stroke-width="1.3"/></svg>
<svg style="left:4.5px;top:819.5px;" width="8" height="9" viewBox="0 0 8 9"><path d="M2 0.8H6M2.5 0.8V4.5M5.5 0.8V4.5M0.8 4.5H7.2M4 4.5V8.5" stroke="#f0f0f0" stroke-width="1" fill="none"/></svg>
<div style="left:1px;top:830px;width:15px;height:27px;overflow:hidden;"><span style="left:1.5px;top:26.5px;font-size:10px;line-height:12px;color:#cfcfcf;transform-origin:0 0;transform:rotate(-90deg);">Команды</span></div>
</body></html>
